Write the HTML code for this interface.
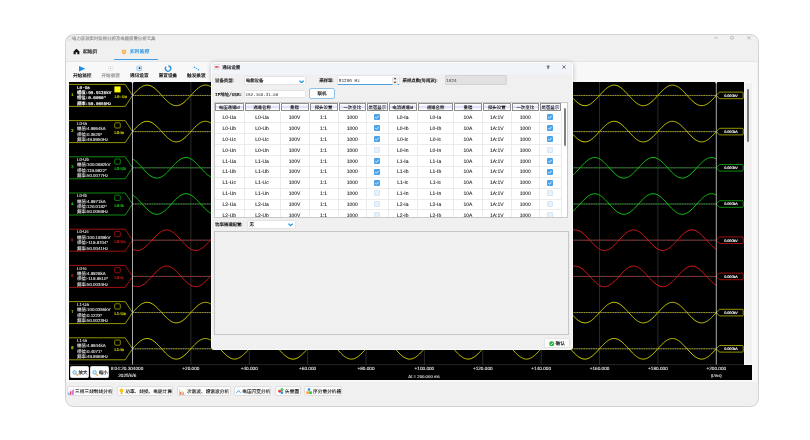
<!DOCTYPE html><html lang="zh"><head><meta charset="utf-8"><title>电力录波实时监视分析及电能质量分析工具</title><style>
*{box-sizing:border-box;margin:0;padding:0}
html,body{text-rendering:geometricPrecision;width:810px;height:440px;background:#fff;overflow:hidden}
body{position:relative;font-family:"Liberation Sans","Noto Sans CJK SC",sans-serif;color:#222}
.a{position:absolute}
svg.ov{position:absolute;left:0;top:0;text-rendering:geometricPrecision;will-change:transform}
#win{left:64.6px;top:34.3px;width:694.2px;height:373px;background:#f0f0f0;border:1.8px solid #d2d2d2;border-radius:8.5px;overflow:hidden}
#toolbar{left:66.4px;top:61px;width:690.6px;height:321.4px;background:#f8f8f8;border-top:0.5px solid #e6e6e6}
#chart{left:69px;top:82.4px;width:675px;height:282.6px;background:#000}
#axis{left:69px;top:365px;width:683px;height:14.5px;background:#000}
#vs{left:744px;top:82.4px;width:8.5px;height:282.6px;background:#f0f0f0;border:1px solid #fafafa}
#vthumb{left:746.8px;top:88.5px;width:2.4px;height:53px;background:#7a7a7a;border-radius:1px}
.bbtn{top:385.7px;height:10.7px;background:#fcfcfc;border:0.6px solid #dedede;border-radius:2px}
.zb{top:366.3px;height:12.2px;background:#fdfdfd;border-radius:1.5px;border:0.5px solid #ddd}
#dlg{left:211px;top:61.5px;width:361.7px;height:288.7px;background:#f0f0f0;border:0.8px solid #fafafa;border-radius:3px;box-shadow:0 1px 5px rgba(0,0,0,.25);overflow:hidden}
#dtitle{left:0;top:0;width:362px;height:11px;background:#f1f4f9}
.inp{background:#fff;border:0.5px solid #e3e3e3;border-radius:1.5px}
.hd{position:absolute;top:102.7px;height:8.6px;border:0.7px solid #8e8e8e;background:linear-gradient(#fff 0,#fff 22%,#dfe1fb 30%,#dfe1fb 70%,#fff 78%,#fff 100%);}
.cb{position:absolute;width:6px;height:6px;border-radius:1px;transform:translate(-50%,-50%)}
.cb.on{background:#4da3ea}
.cb.off{background:#e6f1fb;border:0.5px solid #d3e5f6}
</style></head><body>
<div id="win" class="a"></div>
<svg class="a" style="left:66.5px;top:36px" width="5" height="5" viewBox="0 0 5 5"><circle cx="2.5" cy="2.5" r="1.6" fill="#fff" stroke="#bbb" stroke-width=".6"/></svg>
<svg class="a" style="left:705px;top:33px" width="52" height="10" viewBox="705 33 52 10" fill="none" stroke="#a8a8a8" stroke-width=".7"><path d="M714 37.8h3.6"/><circle cx="732" cy="37.8" r="1.5"/><path d="M747.4 36.2l3.2 3.2M750.6 36.2l-3.2 3.2"/></svg>
<svg class="a" style="left:73px;top:48px" width="7" height="7" viewBox="0 0 7 7"><path d="M3.5 0.8L0.6 3.5V6.2H2.7V4.3H4.3V6.2H6.4V3.5Z" fill="#111"/></svg>
<svg class="a" style="left:120.5px;top:48.5px" width="6" height="6" viewBox="0 0 6 6"><path d="M0.8 0.8H5.2V3.4Q5.2 4.4 3 5.4Q0.8 4.4 0.8 3.4Z" fill="#f7b560"/><path d="M2 2.4h2" stroke="#fde6c4" stroke-width=".6"/></svg>
<div class="a" style="left:113.6px;top:58.6px;width:44.6px;height:1.1px;background:#3a9fe8;border-radius:.5px"></div>
<div id="toolbar" class="a"></div>
<svg class="a" style="left:70px;top:62px" width="140" height="12" viewBox="70 62 140 12"><path d="M79 65.9L85.3 68.7L79 71.5Z" fill="#1e8fe0"/><circle cx="110.7" cy="68.4" r="2.3" fill="#fff" stroke="#cfcfcf" stroke-width=".5"/><path d="M110.1 67.5l1.4 .9l-1.4 .9z" fill="#999"/><rect x="136.9" y="66.2" width="4.8" height="4.4" rx=".8" fill="#eaf4fd" stroke="#5db0ee" stroke-width=".6"/><circle cx="139.6" cy="68.2" r=".9" fill="#222"/><path d="M169.9 66.4A2.7 2.7 0 1 1 166 66.7" fill="none" stroke="#1e8fe0" stroke-width="1.2"/><path d="M168.3 64.9l2.6 1.2l-2 1.7z" fill="#1e8fe0"/><path d="M194.6 67.4L196.5 68.4L198.4 69.6" stroke="#8fc9f4" stroke-width=".5" fill="none"/><circle cx="194.4" cy="67.3" r=".7" fill="#2b97e5"/><circle cx="196.5" cy="68.5" r=".6" fill="#2b97e5"/><circle cx="198.6" cy="69.7" r=".7" fill="#2b97e5"/></svg>
<div id="chart" class="a"></div><div id="axis" class="a"></div><div id="vs" class="a"></div><div id="vthumb" class="a"></div>
<svg class="ov" width="810" height="440" viewBox="0 0 810 440" font-family='"Liberation Sans","Noto Sans CJK SC",sans-serif'><defs><clipPath id="cc"><rect x="69" y="82" width="675" height="283"/></clipPath></defs><g clip-path="url(#cc)"><path d="M190.88 82V365" stroke="#2b2b2b" stroke-width="1"/><path d="M249.26 82V365" stroke="#2b2b2b" stroke-width="1"/><path d="M307.64 82V365" stroke="#2b2b2b" stroke-width="1"/><path d="M366.02 82V365" stroke="#2b2b2b" stroke-width="1"/><path d="M424.40 82V365" stroke="#2b2b2b" stroke-width="1"/><path d="M482.78 82V365" stroke="#2b2b2b" stroke-width="1"/><path d="M541.16 82V365" stroke="#2b2b2b" stroke-width="1"/><path d="M599.54 82V365" stroke="#2b2b2b" stroke-width="1"/><path d="M657.92 82V365" stroke="#2b2b2b" stroke-width="1"/><path d="M132.50 95.40H716.30" stroke="#484848" stroke-width="1"/><path d="M132.50 95.40H716.30" stroke="#cfcf00" stroke-width=".8" stroke-dasharray="1.4 1" opacity=".8"/><path d="M132.50 95.40L133.47 94.32L134.45 93.26L135.42 92.22L136.39 91.21L137.37 90.25L138.34 89.35L139.31 88.51L140.28 87.75L141.26 87.07L142.23 86.48L143.20 85.99L144.18 85.60L145.15 85.33L146.12 85.16L147.09 85.10L148.07 85.16L149.04 85.33L150.01 85.60L150.99 85.99L151.96 86.48L152.93 87.07L153.91 87.75L154.88 88.51L155.85 89.35L156.82 90.25L157.80 91.21L158.77 92.22L159.74 93.26L160.72 94.32L161.69 95.40L162.66 96.48L163.64 97.54L164.61 98.58L165.58 99.59L166.56 100.55L167.53 101.45L168.50 102.29L169.47 103.05L170.45 103.73L171.42 104.32L172.39 104.81L173.37 105.20L174.34 105.47L175.31 105.64L176.28 105.70L177.26 105.64L178.23 105.47L179.20 105.20L180.18 104.81L181.15 104.32L182.12 103.73L183.10 103.05L184.07 102.29L185.04 101.45L186.02 100.55L186.99 99.59L187.96 98.58L188.93 97.54L189.91 96.48L190.88 95.40L191.85 94.32L192.83 93.26L193.80 92.22L194.77 91.21L195.75 90.25L196.72 89.35L197.69 88.51L198.66 87.75L199.64 87.07L200.61 86.48L201.58 85.99L202.56 85.60L203.53 85.33L204.50 85.16L205.48 85.10L206.45 85.16L207.42 85.33L208.39 85.60L209.37 85.99L210.34 86.48L211.31 87.07L212.29 87.75L213.26 88.51L214.23 89.35L215.21 90.25L216.18 91.21L217.15 92.22L218.12 93.26L219.10 94.32L220.07 95.40L221.04 96.48L222.02 97.54L222.99 98.58L223.96 99.59L224.94 100.55L225.91 101.45L226.88 102.29L227.85 103.05L228.83 103.73L229.80 104.32L230.77 104.81L231.75 105.20L232.72 105.47L233.69 105.64L234.67 105.70L235.64 105.64L236.61 105.47L237.58 105.20L238.56 104.81L239.53 104.32L240.50 103.73L241.48 103.05L242.45 102.29L243.42 101.45L244.40 100.55L245.37 99.59L246.34 98.58L247.31 97.54L248.29 96.48L249.26 95.40L250.23 94.32L251.21 93.26L252.18 92.22L253.15 91.21L254.13 90.25L255.10 89.35L256.07 88.51L257.04 87.75L258.02 87.07L258.99 86.48L259.96 85.99L260.94 85.60L261.91 85.33L262.88 85.16L263.86 85.10L264.83 85.16L265.80 85.33L266.77 85.60L267.75 85.99L268.72 86.48L269.69 87.07L270.67 87.75L271.64 88.51L272.61 89.35L273.59 90.25L274.56 91.21L275.53 92.22L276.50 93.26L277.48 94.32L278.45 95.40L279.42 96.48L280.40 97.54L281.37 98.58L282.34 99.59L283.32 100.55L284.29 101.45L285.26 102.29L286.23 103.05L287.21 103.73L288.18 104.32L289.15 104.81L290.13 105.20L291.10 105.47L292.07 105.64L293.05 105.70L294.02 105.64L294.99 105.47L295.96 105.20L296.94 104.81L297.91 104.32L298.88 103.73L299.86 103.05L300.83 102.29L301.80 101.45L302.78 100.55L303.75 99.59L304.72 98.58L305.69 97.54L306.67 96.48L307.64 95.40L308.61 94.32L309.59 93.26L310.56 92.22L311.53 91.21L312.50 90.25L313.48 89.35L314.45 88.51L315.42 87.75L316.40 87.07L317.37 86.48L318.34 85.99L319.32 85.60L320.29 85.33L321.26 85.16L322.24 85.10L323.21 85.16L324.18 85.33L325.15 85.60L326.13 85.99L327.10 86.48L328.07 87.07L329.05 87.75L330.02 88.51L330.99 89.35L331.97 90.25L332.94 91.21L333.91 92.22L334.88 93.26L335.86 94.32L336.83 95.40L337.80 96.48L338.78 97.54L339.75 98.58L340.72 99.59L341.70 100.55L342.67 101.45L343.64 102.29L344.61 103.05L345.59 103.73L346.56 104.32L347.53 104.81L348.51 105.20L349.48 105.47L350.45 105.64L351.43 105.70L352.40 105.64L353.37 105.47L354.34 105.20L355.32 104.81L356.29 104.32L357.26 103.73L358.24 103.05L359.21 102.29L360.18 101.45L361.16 100.55L362.13 99.59L363.10 98.58L364.07 97.54L365.05 96.48L366.02 95.40L366.99 94.32L367.97 93.26L368.94 92.22L369.91 91.21L370.89 90.25L371.86 89.35L372.83 88.51L373.80 87.75L374.78 87.07L375.75 86.48L376.72 85.99L377.70 85.60L378.67 85.33L379.64 85.16L380.62 85.10L381.59 85.16L382.56 85.33L383.53 85.60L384.51 85.99L385.48 86.48L386.45 87.07L387.43 87.75L388.40 88.51L389.37 89.35L390.35 90.25L391.32 91.21L392.29 92.22L393.26 93.26L394.24 94.32L395.21 95.40L396.18 96.48L397.16 97.54L398.13 98.58L399.10 99.59L400.08 100.55L401.05 101.45L402.02 102.29L402.99 103.05L403.97 103.73L404.94 104.32L405.91 104.81L406.89 105.20L407.86 105.47L408.83 105.64L409.81 105.70L410.78 105.64L411.75 105.47L412.72 105.20L413.70 104.81L414.67 104.32L415.64 103.73L416.62 103.05L417.59 102.29L418.56 101.45L419.54 100.55L420.51 99.59L421.48 98.58L422.45 97.54L423.43 96.48L424.40 95.40L425.37 94.32L426.35 93.26L427.32 92.22L428.29 91.21L429.27 90.25L430.24 89.35L431.21 88.51L432.18 87.75L433.16 87.07L434.13 86.48L435.10 85.99L436.08 85.60L437.05 85.33L438.02 85.16L439.00 85.10L439.97 85.16L440.94 85.33L441.91 85.60L442.89 85.99L443.86 86.48L444.83 87.07L445.81 87.75L446.78 88.51L447.75 89.35L448.73 90.25L449.70 91.21L450.67 92.22L451.64 93.26L452.62 94.32L453.59 95.40L454.56 96.48L455.54 97.54L456.51 98.58L457.48 99.59L458.46 100.55L459.43 101.45L460.40 102.29L461.37 103.05L462.35 103.73L463.32 104.32L464.29 104.81L465.27 105.20L466.24 105.47L467.21 105.64L468.19 105.70L469.16 105.64L470.13 105.47L471.10 105.20L472.08 104.81L473.05 104.32L474.02 103.73L475.00 103.05L475.97 102.29L476.94 101.45L477.92 100.55L478.89 99.59L479.86 98.58L480.83 97.54L481.81 96.48L482.78 95.40L483.75 94.32L484.73 93.26L485.70 92.22L486.67 91.21L487.65 90.25L488.62 89.35L489.59 88.51L490.56 87.75L491.54 87.07L492.51 86.48L493.48 85.99L494.46 85.60L495.43 85.33L496.40 85.16L497.38 85.10L498.35 85.16L499.32 85.33L500.29 85.60L501.27 85.99L502.24 86.48L503.21 87.07L504.19 87.75L505.16 88.51L506.13 89.35L507.11 90.25L508.08 91.21L509.05 92.22L510.02 93.26L511.00 94.32L511.97 95.40L512.94 96.48L513.92 97.54L514.89 98.58L515.86 99.59L516.84 100.55L517.81 101.45L518.78 102.29L519.75 103.05L520.73 103.73L521.70 104.32L522.67 104.81L523.65 105.20L524.62 105.47L525.59 105.64L526.57 105.70L527.54 105.64L528.51 105.47L529.48 105.20L530.46 104.81L531.43 104.32L532.40 103.73L533.38 103.05L534.35 102.29L535.32 101.45L536.30 100.55L537.27 99.59L538.24 98.58L539.21 97.54L540.19 96.48L541.16 95.40L542.13 94.32L543.11 93.26L544.08 92.22L545.05 91.21L546.03 90.25L547.00 89.35L547.97 88.51L548.94 87.75L549.92 87.07L550.89 86.48L551.86 85.99L552.84 85.60L553.81 85.33L554.78 85.16L555.76 85.10L556.73 85.16L557.70 85.33L558.67 85.60L559.65 85.99L560.62 86.48L561.59 87.07L562.57 87.75L563.54 88.51L564.51 89.35L565.49 90.25L566.46 91.21L567.43 92.22L568.40 93.26L569.38 94.32L570.35 95.40L571.32 96.48L572.30 97.54L573.27 98.58L574.24 99.59L575.22 100.55L576.19 101.45L577.16 102.29L578.13 103.05L579.11 103.73L580.08 104.32L581.05 104.81L582.03 105.20L583.00 105.47L583.97 105.64L584.95 105.70L585.92 105.64L586.89 105.47L587.86 105.20L588.84 104.81L589.81 104.32L590.78 103.73L591.76 103.05L592.73 102.29L593.70 101.45L594.68 100.55L595.65 99.59L596.62 98.58L597.59 97.54L598.57 96.48L599.54 95.40L600.51 94.32L601.49 93.26L602.46 92.22L603.43 91.21L604.41 90.25L605.38 89.35L606.35 88.51L607.32 87.75L608.30 87.07L609.27 86.48L610.24 85.99L611.22 85.60L612.19 85.33L613.16 85.16L614.14 85.10L615.11 85.16L616.08 85.33L617.05 85.60L618.03 85.99L619.00 86.48L619.97 87.07L620.95 87.75L621.92 88.51L622.89 89.35L623.87 90.25L624.84 91.21L625.81 92.22L626.78 93.26L627.76 94.32L628.73 95.40L629.70 96.48L630.68 97.54L631.65 98.58L632.62 99.59L633.60 100.55L634.57 101.45L635.54 102.29L636.51 103.05L637.49 103.73L638.46 104.32L639.43 104.81L640.41 105.20L641.38 105.47L642.35 105.64L643.33 105.70L644.30 105.64L645.27 105.47L646.24 105.20L647.22 104.81L648.19 104.32L649.16 103.73L650.14 103.05L651.11 102.29L652.08 101.45L653.06 100.55L654.03 99.59L655.00 98.58L655.97 97.54L656.95 96.48L657.92 95.40L658.89 94.32L659.87 93.26L660.84 92.22L661.81 91.21L662.79 90.25L663.76 89.35L664.73 88.51L665.70 87.75L666.68 87.07L667.65 86.48L668.62 85.99L669.60 85.60L670.57 85.33L671.54 85.16L672.52 85.10L673.49 85.16L674.46 85.33L675.43 85.60L676.41 85.99L677.38 86.48L678.35 87.07L679.33 87.75L680.30 88.51L681.27 89.35L682.25 90.25L683.22 91.21L684.19 92.22L685.16 93.26L686.14 94.32L687.11 95.40L688.08 96.48L689.06 97.54L690.03 98.58L691.00 99.59L691.98 100.55L692.95 101.45L693.92 102.29L694.89 103.05L695.87 103.73L696.84 104.32L697.81 104.81L698.79 105.20L699.76 105.47L700.73 105.64L701.71 105.70L702.68 105.64L703.65 105.47L704.62 105.20L705.60 104.81L706.57 104.32L707.54 103.73L708.52 103.05L709.49 102.29L710.46 101.45L711.44 100.55L712.41 99.59L713.38 98.58L714.35 97.54L715.33 96.48L716.30 95.40" fill="none" stroke="#cfcf00" stroke-width="1"/><path d="M68 84.40H125.2L132.50 95.40L125.2 106.40H68" fill="#000" stroke="#b9b900" stroke-width=".8"/><text x="71.30" y="96.04" font-size="4" fill="#cfcf00" stroke="#cfcf00" stroke-width="0.18">1</text><text x="77.00" y="88.55" font-size="4.3" fill="#f4f4f4" stroke="#f4f4f4" stroke-width="0.18" font-family='"Liberation Mono","Noto Sans CJK SC",monospace'>L0-Ua</text><text x="77.00" y="93.95" font-size="4.3" fill="#f4f4f4" stroke="#f4f4f4" stroke-width="0.18" font-family='"Liberation Mono","Noto Sans CJK SC",monospace'>幅值:99.9135kV</text><text x="77.00" y="99.35" font-size="4.3" fill="#f4f4f4" stroke="#f4f4f4" stroke-width="0.18" font-family='"Liberation Mono","Noto Sans CJK SC",monospace'>相位:0.0000°</text><text x="77.00" y="104.75" font-size="4.3" fill="#f4f4f4" stroke="#f4f4f4" stroke-width="0.18" font-family='"Liberation Mono","Noto Sans CJK SC",monospace'>频率:50.0065Hz</text><rect x="114.4" y="86.40" width="6.2" height="6" fill="#ffff00"/><text x="114.40" y="97.91" font-size="4.2" fill="#cfcf00" stroke="#cfcf00" stroke-width="0.18" font-family='"Liberation Mono","Noto Sans CJK SC",monospace'>L0-Ua</text><path d="M716.30 95.40L719.4 92.10H742.4Q743.2 92.10 743.2 92.90V97.90Q743.2 98.70 742.4 98.70H719.4Z" fill="#000" stroke="#b9b900" stroke-width=".8"/><text x="731.00" y="96.73" font-size="3.7" fill="#f4f4f4" stroke="#f4f4f4" stroke-width="0.18" text-anchor="middle">0.000kV</text><path d="M132.50 131.60H716.30" stroke="#484848" stroke-width="1"/><path d="M132.50 131.60H716.30" stroke="#cfcf00" stroke-width=".8" stroke-dasharray="1.4 1" opacity=".8"/><path d="M132.50 131.54L133.47 130.46L134.45 129.40L135.42 128.36L136.39 127.35L137.37 126.39L138.34 125.49L139.31 124.66L140.28 123.90L141.26 123.23L142.23 122.65L143.20 122.16L144.18 121.78L145.15 121.51L146.12 121.35L147.09 121.30L148.07 121.36L149.04 121.54L150.01 121.82L150.99 122.22L151.96 122.71L152.93 123.31L153.91 123.99L154.88 124.76L155.85 125.60L156.82 126.51L157.80 127.47L158.77 128.48L159.74 129.52L160.72 130.59L161.69 131.66L162.66 132.74L163.64 133.80L164.61 134.84L165.58 135.85L166.56 136.81L167.53 137.71L168.50 138.54L169.47 139.30L170.45 139.97L171.42 140.55L172.39 141.04L173.37 141.42L174.34 141.69L175.31 141.85L176.28 141.90L177.26 141.84L178.23 141.66L179.20 141.38L180.18 140.98L181.15 140.49L182.12 139.89L183.10 139.21L184.07 138.44L185.04 137.60L186.02 136.69L186.99 135.73L187.96 134.72L188.93 133.68L189.91 132.61L190.88 131.54L191.85 130.46L192.83 129.40L193.80 128.36L194.77 127.35L195.75 126.39L196.72 125.49L197.69 124.66L198.66 123.90L199.64 123.23L200.61 122.65L201.58 122.16L202.56 121.78L203.53 121.51L204.50 121.35L205.48 121.30L206.45 121.36L207.42 121.54L208.39 121.82L209.37 122.22L210.34 122.71L211.31 123.31L212.29 123.99L213.26 124.76L214.23 125.60L215.21 126.51L216.18 127.47L217.15 128.48L218.12 129.52L219.10 130.59L220.07 131.66L221.04 132.74L222.02 133.80L222.99 134.84L223.96 135.85L224.94 136.81L225.91 137.71L226.88 138.54L227.85 139.30L228.83 139.97L229.80 140.55L230.77 141.04L231.75 141.42L232.72 141.69L233.69 141.85L234.67 141.90L235.64 141.84L236.61 141.66L237.58 141.38L238.56 140.98L239.53 140.49L240.50 139.89L241.48 139.21L242.45 138.44L243.42 137.60L244.40 136.69L245.37 135.73L246.34 134.72L247.31 133.68L248.29 132.61L249.26 131.54L250.23 130.46L251.21 129.40L252.18 128.36L253.15 127.35L254.13 126.39L255.10 125.49L256.07 124.66L257.04 123.90L258.02 123.23L258.99 122.65L259.96 122.16L260.94 121.78L261.91 121.51L262.88 121.35L263.86 121.30L264.83 121.36L265.80 121.54L266.77 121.82L267.75 122.22L268.72 122.71L269.69 123.31L270.67 123.99L271.64 124.76L272.61 125.60L273.59 126.51L274.56 127.47L275.53 128.48L276.50 129.52L277.48 130.59L278.45 131.66L279.42 132.74L280.40 133.80L281.37 134.84L282.34 135.85L283.32 136.81L284.29 137.71L285.26 138.54L286.23 139.30L287.21 139.97L288.18 140.55L289.15 141.04L290.13 141.42L291.10 141.69L292.07 141.85L293.05 141.90L294.02 141.84L294.99 141.66L295.96 141.38L296.94 140.98L297.91 140.49L298.88 139.89L299.86 139.21L300.83 138.44L301.80 137.60L302.78 136.69L303.75 135.73L304.72 134.72L305.69 133.68L306.67 132.61L307.64 131.54L308.61 130.46L309.59 129.40L310.56 128.36L311.53 127.35L312.50 126.39L313.48 125.49L314.45 124.66L315.42 123.90L316.40 123.23L317.37 122.65L318.34 122.16L319.32 121.78L320.29 121.51L321.26 121.35L322.24 121.30L323.21 121.36L324.18 121.54L325.15 121.82L326.13 122.22L327.10 122.71L328.07 123.31L329.05 123.99L330.02 124.76L330.99 125.60L331.97 126.51L332.94 127.47L333.91 128.48L334.88 129.52L335.86 130.59L336.83 131.66L337.80 132.74L338.78 133.80L339.75 134.84L340.72 135.85L341.70 136.81L342.67 137.71L343.64 138.54L344.61 139.30L345.59 139.97L346.56 140.55L347.53 141.04L348.51 141.42L349.48 141.69L350.45 141.85L351.43 141.90L352.40 141.84L353.37 141.66L354.34 141.38L355.32 140.98L356.29 140.49L357.26 139.89L358.24 139.21L359.21 138.44L360.18 137.60L361.16 136.69L362.13 135.73L363.10 134.72L364.07 133.68L365.05 132.61L366.02 131.54L366.99 130.46L367.97 129.40L368.94 128.36L369.91 127.35L370.89 126.39L371.86 125.49L372.83 124.66L373.80 123.90L374.78 123.23L375.75 122.65L376.72 122.16L377.70 121.78L378.67 121.51L379.64 121.35L380.62 121.30L381.59 121.36L382.56 121.54L383.53 121.82L384.51 122.22L385.48 122.71L386.45 123.31L387.43 123.99L388.40 124.76L389.37 125.60L390.35 126.51L391.32 127.47L392.29 128.48L393.26 129.52L394.24 130.59L395.21 131.66L396.18 132.74L397.16 133.80L398.13 134.84L399.10 135.85L400.08 136.81L401.05 137.71L402.02 138.54L402.99 139.30L403.97 139.97L404.94 140.55L405.91 141.04L406.89 141.42L407.86 141.69L408.83 141.85L409.81 141.90L410.78 141.84L411.75 141.66L412.72 141.38L413.70 140.98L414.67 140.49L415.64 139.89L416.62 139.21L417.59 138.44L418.56 137.60L419.54 136.69L420.51 135.73L421.48 134.72L422.45 133.68L423.43 132.61L424.40 131.54L425.37 130.46L426.35 129.40L427.32 128.36L428.29 127.35L429.27 126.39L430.24 125.49L431.21 124.66L432.18 123.90L433.16 123.23L434.13 122.65L435.10 122.16L436.08 121.78L437.05 121.51L438.02 121.35L439.00 121.30L439.97 121.36L440.94 121.54L441.91 121.82L442.89 122.22L443.86 122.71L444.83 123.31L445.81 123.99L446.78 124.76L447.75 125.60L448.73 126.51L449.70 127.47L450.67 128.48L451.64 129.52L452.62 130.59L453.59 131.66L454.56 132.74L455.54 133.80L456.51 134.84L457.48 135.85L458.46 136.81L459.43 137.71L460.40 138.54L461.37 139.30L462.35 139.97L463.32 140.55L464.29 141.04L465.27 141.42L466.24 141.69L467.21 141.85L468.19 141.90L469.16 141.84L470.13 141.66L471.10 141.38L472.08 140.98L473.05 140.49L474.02 139.89L475.00 139.21L475.97 138.44L476.94 137.60L477.92 136.69L478.89 135.73L479.86 134.72L480.83 133.68L481.81 132.61L482.78 131.54L483.75 130.46L484.73 129.40L485.70 128.36L486.67 127.35L487.65 126.39L488.62 125.49L489.59 124.66L490.56 123.90L491.54 123.23L492.51 122.65L493.48 122.16L494.46 121.78L495.43 121.51L496.40 121.35L497.38 121.30L498.35 121.36L499.32 121.54L500.29 121.82L501.27 122.22L502.24 122.71L503.21 123.31L504.19 123.99L505.16 124.76L506.13 125.60L507.11 126.51L508.08 127.47L509.05 128.48L510.02 129.52L511.00 130.59L511.97 131.66L512.94 132.74L513.92 133.80L514.89 134.84L515.86 135.85L516.84 136.81L517.81 137.71L518.78 138.54L519.75 139.30L520.73 139.97L521.70 140.55L522.67 141.04L523.65 141.42L524.62 141.69L525.59 141.85L526.57 141.90L527.54 141.84L528.51 141.66L529.48 141.38L530.46 140.98L531.43 140.49L532.40 139.89L533.38 139.21L534.35 138.44L535.32 137.60L536.30 136.69L537.27 135.73L538.24 134.72L539.21 133.68L540.19 132.61L541.16 131.54L542.13 130.46L543.11 129.40L544.08 128.36L545.05 127.35L546.03 126.39L547.00 125.49L547.97 124.66L548.94 123.90L549.92 123.23L550.89 122.65L551.86 122.16L552.84 121.78L553.81 121.51L554.78 121.35L555.76 121.30L556.73 121.36L557.70 121.54L558.67 121.82L559.65 122.22L560.62 122.71L561.59 123.31L562.57 123.99L563.54 124.76L564.51 125.60L565.49 126.51L566.46 127.47L567.43 128.48L568.40 129.52L569.38 130.59L570.35 131.66L571.32 132.74L572.30 133.80L573.27 134.84L574.24 135.85L575.22 136.81L576.19 137.71L577.16 138.54L578.13 139.30L579.11 139.97L580.08 140.55L581.05 141.04L582.03 141.42L583.00 141.69L583.97 141.85L584.95 141.90L585.92 141.84L586.89 141.66L587.86 141.38L588.84 140.98L589.81 140.49L590.78 139.89L591.76 139.21L592.73 138.44L593.70 137.60L594.68 136.69L595.65 135.73L596.62 134.72L597.59 133.68L598.57 132.61L599.54 131.54L600.51 130.46L601.49 129.40L602.46 128.36L603.43 127.35L604.41 126.39L605.38 125.49L606.35 124.66L607.32 123.90L608.30 123.23L609.27 122.65L610.24 122.16L611.22 121.78L612.19 121.51L613.16 121.35L614.14 121.30L615.11 121.36L616.08 121.54L617.05 121.82L618.03 122.22L619.00 122.71L619.97 123.31L620.95 123.99L621.92 124.76L622.89 125.60L623.87 126.51L624.84 127.47L625.81 128.48L626.78 129.52L627.76 130.59L628.73 131.66L629.70 132.74L630.68 133.80L631.65 134.84L632.62 135.85L633.60 136.81L634.57 137.71L635.54 138.54L636.51 139.30L637.49 139.97L638.46 140.55L639.43 141.04L640.41 141.42L641.38 141.69L642.35 141.85L643.33 141.90L644.30 141.84L645.27 141.66L646.24 141.38L647.22 140.98L648.19 140.49L649.16 139.89L650.14 139.21L651.11 138.44L652.08 137.60L653.06 136.69L654.03 135.73L655.00 134.72L655.97 133.68L656.95 132.61L657.92 131.54L658.89 130.46L659.87 129.40L660.84 128.36L661.81 127.35L662.79 126.39L663.76 125.49L664.73 124.66L665.70 123.90L666.68 123.23L667.65 122.65L668.62 122.16L669.60 121.78L670.57 121.51L671.54 121.35L672.52 121.30L673.49 121.36L674.46 121.54L675.43 121.82L676.41 122.22L677.38 122.71L678.35 123.31L679.33 123.99L680.30 124.76L681.27 125.60L682.25 126.51L683.22 127.47L684.19 128.48L685.16 129.52L686.14 130.59L687.11 131.66L688.08 132.74L689.06 133.80L690.03 134.84L691.00 135.85L691.98 136.81L692.95 137.71L693.92 138.54L694.89 139.30L695.87 139.97L696.84 140.55L697.81 141.04L698.79 141.42L699.76 141.69L700.73 141.85L701.71 141.90L702.68 141.84L703.65 141.66L704.62 141.38L705.60 140.98L706.57 140.49L707.54 139.89L708.52 139.21L709.49 138.44L710.46 137.60L711.44 136.69L712.41 135.73L713.38 134.72L714.35 133.68L715.33 132.61L716.30 131.54" fill="none" stroke="#cfcf00" stroke-width="1"/><path d="M68 120.60H125.2L132.50 131.60L125.2 142.60H68" fill="#000" stroke="#b9b900" stroke-width=".8"/><text x="71.30" y="132.24" font-size="4" fill="#cfcf00" stroke="#cfcf00" stroke-width="0.18">2</text><text x="77.00" y="124.78" font-size="4.4" fill="#e8e8e8" stroke="#e8e8e8" stroke-width="0.08">L0-Ia</text><text x="77.00" y="130.18" font-size="4.4" fill="#e8e8e8" stroke="#e8e8e8" stroke-width="0.08">幅值:4.9964kA</text><text x="77.00" y="135.58" font-size="4.4" fill="#e8e8e8" stroke="#e8e8e8" stroke-width="0.08">相位:0.3629°</text><text x="77.00" y="140.98" font-size="4.4" fill="#e8e8e8" stroke="#e8e8e8" stroke-width="0.08">频率:49.9950Hz</text><rect x="114.7" y="122.80" width="5.6" height="5.2" rx="1" fill="none" stroke="#b9b900" stroke-width=".7"/><text x="114.40" y="134.11" font-size="4.2" fill="#cfcf00" stroke="#cfcf00" stroke-width="0.18">L0-Ia</text><path d="M716.30 131.60L719.4 128.30H742.4Q743.2 128.30 743.2 129.10V134.10Q743.2 134.90 742.4 134.90H719.4Z" fill="#000" stroke="#b9b900" stroke-width=".8"/><text x="731.00" y="132.93" font-size="3.7" fill="#f4f4f4" stroke="#f4f4f4" stroke-width="0.18" text-anchor="middle">0.000kA</text><path d="M132.50 167.80H716.30" stroke="#484848" stroke-width="1"/><path d="M132.50 167.80H716.30" stroke="#12c812" stroke-width=".8" stroke-dasharray="1.4 1" opacity=".8"/><path d="M132.50 158.88L133.47 159.47L134.45 160.14L135.42 160.91L136.39 161.74L137.37 162.65L138.34 163.61L139.31 164.61L140.28 165.65L141.26 166.72L142.23 167.80L143.20 168.87L144.18 169.94L145.15 170.98L146.12 171.99L147.09 172.95L148.07 173.85L149.04 174.69L150.01 175.45L150.99 176.13L151.96 176.72L152.93 177.21L153.91 177.59L154.88 177.87L155.85 178.04L156.82 178.10L157.80 178.04L158.77 177.88L159.74 177.60L160.72 177.21L161.69 176.72L162.66 176.13L163.64 175.46L164.61 174.69L165.58 173.86L166.56 172.95L167.53 171.99L168.50 170.99L169.47 169.95L170.45 168.88L171.42 167.80L172.39 166.73L173.37 165.66L174.34 164.62L175.31 163.61L176.28 162.65L177.26 161.75L178.23 160.91L179.20 160.15L180.18 159.47L181.15 158.88L182.12 158.39L183.10 158.01L184.07 157.73L185.04 157.56L186.02 157.50L186.99 157.56L187.96 157.72L188.93 158.00L189.91 158.39L190.88 158.88L191.85 159.47L192.83 160.14L193.80 160.91L194.77 161.74L195.75 162.65L196.72 163.61L197.69 164.61L198.66 165.65L199.64 166.72L200.61 167.80L201.58 168.87L202.56 169.94L203.53 170.98L204.50 171.99L205.48 172.95L206.45 173.85L207.42 174.69L208.39 175.45L209.37 176.13L210.34 176.72L211.31 177.21L212.29 177.59L213.26 177.87L214.23 178.04L215.21 178.10L216.18 178.04L217.15 177.88L218.12 177.60L219.10 177.21L220.07 176.72L221.04 176.13L222.02 175.46L222.99 174.69L223.96 173.86L224.94 172.95L225.91 171.99L226.88 170.99L227.85 169.95L228.83 168.88L229.80 167.80L230.77 166.73L231.75 165.66L232.72 164.62L233.69 163.61L234.67 162.65L235.64 161.75L236.61 160.91L237.58 160.15L238.56 159.47L239.53 158.88L240.50 158.39L241.48 158.01L242.45 157.73L243.42 157.56L244.40 157.50L245.37 157.56L246.34 157.72L247.31 158.00L248.29 158.39L249.26 158.88L250.23 159.47L251.21 160.14L252.18 160.91L253.15 161.74L254.13 162.65L255.10 163.61L256.07 164.61L257.04 165.65L258.02 166.72L258.99 167.80L259.96 168.87L260.94 169.94L261.91 170.98L262.88 171.99L263.86 172.95L264.83 173.85L265.80 174.69L266.77 175.45L267.75 176.13L268.72 176.72L269.69 177.21L270.67 177.59L271.64 177.87L272.61 178.04L273.59 178.10L274.56 178.04L275.53 177.88L276.50 177.60L277.48 177.21L278.45 176.72L279.42 176.13L280.40 175.46L281.37 174.69L282.34 173.86L283.32 172.95L284.29 171.99L285.26 170.99L286.23 169.95L287.21 168.88L288.18 167.80L289.15 166.73L290.13 165.66L291.10 164.62L292.07 163.61L293.05 162.65L294.02 161.75L294.99 160.91L295.96 160.15L296.94 159.47L297.91 158.88L298.88 158.39L299.86 158.01L300.83 157.73L301.80 157.56L302.78 157.50L303.75 157.56L304.72 157.72L305.69 158.00L306.67 158.39L307.64 158.88L308.61 159.47L309.59 160.14L310.56 160.91L311.53 161.74L312.50 162.65L313.48 163.61L314.45 164.61L315.42 165.65L316.40 166.72L317.37 167.80L318.34 168.87L319.32 169.94L320.29 170.98L321.26 171.99L322.24 172.95L323.21 173.85L324.18 174.69L325.15 175.45L326.13 176.13L327.10 176.72L328.07 177.21L329.05 177.59L330.02 177.87L330.99 178.04L331.97 178.10L332.94 178.04L333.91 177.88L334.88 177.60L335.86 177.21L336.83 176.72L337.80 176.13L338.78 175.46L339.75 174.69L340.72 173.86L341.70 172.95L342.67 171.99L343.64 170.99L344.61 169.95L345.59 168.88L346.56 167.80L347.53 166.73L348.51 165.66L349.48 164.62L350.45 163.61L351.43 162.65L352.40 161.75L353.37 160.91L354.34 160.15L355.32 159.47L356.29 158.88L357.26 158.39L358.24 158.01L359.21 157.73L360.18 157.56L361.16 157.50L362.13 157.56L363.10 157.72L364.07 158.00L365.05 158.39L366.02 158.88L366.99 159.47L367.97 160.14L368.94 160.91L369.91 161.74L370.89 162.65L371.86 163.61L372.83 164.61L373.80 165.65L374.78 166.72L375.75 167.80L376.72 168.87L377.70 169.94L378.67 170.98L379.64 171.99L380.62 172.95L381.59 173.85L382.56 174.69L383.53 175.45L384.51 176.13L385.48 176.72L386.45 177.21L387.43 177.59L388.40 177.87L389.37 178.04L390.35 178.10L391.32 178.04L392.29 177.88L393.26 177.60L394.24 177.21L395.21 176.72L396.18 176.13L397.16 175.46L398.13 174.69L399.10 173.86L400.08 172.95L401.05 171.99L402.02 170.99L402.99 169.95L403.97 168.88L404.94 167.80L405.91 166.73L406.89 165.66L407.86 164.62L408.83 163.61L409.81 162.65L410.78 161.75L411.75 160.91L412.72 160.15L413.70 159.47L414.67 158.88L415.64 158.39L416.62 158.01L417.59 157.73L418.56 157.56L419.54 157.50L420.51 157.56L421.48 157.72L422.45 158.00L423.43 158.39L424.40 158.88L425.37 159.47L426.35 160.14L427.32 160.91L428.29 161.74L429.27 162.65L430.24 163.61L431.21 164.61L432.18 165.65L433.16 166.72L434.13 167.80L435.10 168.87L436.08 169.94L437.05 170.98L438.02 171.99L439.00 172.95L439.97 173.85L440.94 174.69L441.91 175.45L442.89 176.13L443.86 176.72L444.83 177.21L445.81 177.59L446.78 177.87L447.75 178.04L448.73 178.10L449.70 178.04L450.67 177.88L451.64 177.60L452.62 177.21L453.59 176.72L454.56 176.13L455.54 175.46L456.51 174.69L457.48 173.86L458.46 172.95L459.43 171.99L460.40 170.99L461.37 169.95L462.35 168.88L463.32 167.80L464.29 166.73L465.27 165.66L466.24 164.62L467.21 163.61L468.19 162.65L469.16 161.75L470.13 160.91L471.10 160.15L472.08 159.47L473.05 158.88L474.02 158.39L475.00 158.01L475.97 157.73L476.94 157.56L477.92 157.50L478.89 157.56L479.86 157.72L480.83 158.00L481.81 158.39L482.78 158.88L483.75 159.47L484.73 160.14L485.70 160.91L486.67 161.74L487.65 162.65L488.62 163.61L489.59 164.61L490.56 165.65L491.54 166.72L492.51 167.80L493.48 168.87L494.46 169.94L495.43 170.98L496.40 171.99L497.38 172.95L498.35 173.85L499.32 174.69L500.29 175.45L501.27 176.13L502.24 176.72L503.21 177.21L504.19 177.59L505.16 177.87L506.13 178.04L507.11 178.10L508.08 178.04L509.05 177.88L510.02 177.60L511.00 177.21L511.97 176.72L512.94 176.13L513.92 175.46L514.89 174.69L515.86 173.86L516.84 172.95L517.81 171.99L518.78 170.99L519.75 169.95L520.73 168.88L521.70 167.80L522.67 166.73L523.65 165.66L524.62 164.62L525.59 163.61L526.57 162.65L527.54 161.75L528.51 160.91L529.48 160.15L530.46 159.47L531.43 158.88L532.40 158.39L533.38 158.01L534.35 157.73L535.32 157.56L536.30 157.50L537.27 157.56L538.24 157.72L539.21 158.00L540.19 158.39L541.16 158.88L542.13 159.47L543.11 160.14L544.08 160.91L545.05 161.74L546.03 162.65L547.00 163.61L547.97 164.61L548.94 165.65L549.92 166.72L550.89 167.80L551.86 168.87L552.84 169.94L553.81 170.98L554.78 171.99L555.76 172.95L556.73 173.85L557.70 174.69L558.67 175.45L559.65 176.13L560.62 176.72L561.59 177.21L562.57 177.59L563.54 177.87L564.51 178.04L565.49 178.10L566.46 178.04L567.43 177.88L568.40 177.60L569.38 177.21L570.35 176.72L571.32 176.13L572.30 175.46L573.27 174.69L574.24 173.86L575.22 172.95L576.19 171.99L577.16 170.99L578.13 169.95L579.11 168.88L580.08 167.80L581.05 166.73L582.03 165.66L583.00 164.62L583.97 163.61L584.95 162.65L585.92 161.75L586.89 160.91L587.86 160.15L588.84 159.47L589.81 158.88L590.78 158.39L591.76 158.01L592.73 157.73L593.70 157.56L594.68 157.50L595.65 157.56L596.62 157.72L597.59 158.00L598.57 158.39L599.54 158.88L600.51 159.47L601.49 160.14L602.46 160.91L603.43 161.74L604.41 162.65L605.38 163.61L606.35 164.61L607.32 165.65L608.30 166.72L609.27 167.80L610.24 168.87L611.22 169.94L612.19 170.98L613.16 171.99L614.14 172.95L615.11 173.85L616.08 174.69L617.05 175.45L618.03 176.13L619.00 176.72L619.97 177.21L620.95 177.59L621.92 177.87L622.89 178.04L623.87 178.10L624.84 178.04L625.81 177.88L626.78 177.60L627.76 177.21L628.73 176.72L629.70 176.13L630.68 175.46L631.65 174.69L632.62 173.86L633.60 172.95L634.57 171.99L635.54 170.99L636.51 169.95L637.49 168.88L638.46 167.80L639.43 166.73L640.41 165.66L641.38 164.62L642.35 163.61L643.33 162.65L644.30 161.75L645.27 160.91L646.24 160.15L647.22 159.47L648.19 158.88L649.16 158.39L650.14 158.01L651.11 157.73L652.08 157.56L653.06 157.50L654.03 157.56L655.00 157.72L655.97 158.00L656.95 158.39L657.92 158.88L658.89 159.47L659.87 160.14L660.84 160.91L661.81 161.74L662.79 162.65L663.76 163.61L664.73 164.61L665.70 165.65L666.68 166.72L667.65 167.80L668.62 168.87L669.60 169.94L670.57 170.98L671.54 171.99L672.52 172.95L673.49 173.85L674.46 174.69L675.43 175.45L676.41 176.13L677.38 176.72L678.35 177.21L679.33 177.59L680.30 177.87L681.27 178.04L682.25 178.10L683.22 178.04L684.19 177.88L685.16 177.60L686.14 177.21L687.11 176.72L688.08 176.13L689.06 175.46L690.03 174.69L691.00 173.86L691.98 172.95L692.95 171.99L693.92 170.99L694.89 169.95L695.87 168.88L696.84 167.80L697.81 166.73L698.79 165.66L699.76 164.62L700.73 163.61L701.71 162.65L702.68 161.75L703.65 160.91L704.62 160.15L705.60 159.47L706.57 158.88L707.54 158.39L708.52 158.01L709.49 157.73L710.46 157.56L711.44 157.50L712.41 157.56L713.38 157.72L714.35 158.00L715.33 158.39L716.30 158.88" fill="none" stroke="#12c812" stroke-width="1"/><path d="M68 156.80H125.2L132.50 167.80L125.2 178.80H68" fill="#000" stroke="#10b010" stroke-width=".8"/><text x="71.30" y="168.44" font-size="4" fill="#12c812" stroke="#12c812" stroke-width="0.18">3</text><text x="77.00" y="160.98" font-size="4.4" fill="#e8e8e8" stroke="#e8e8e8" stroke-width="0.08">L0-Ub</text><text x="77.00" y="166.38" font-size="4.4" fill="#e8e8e8" stroke="#e8e8e8" stroke-width="0.08">幅值:100.0982kV</text><text x="77.00" y="171.78" font-size="4.4" fill="#e8e8e8" stroke="#e8e8e8" stroke-width="0.08">相位:119.9822°</text><text x="77.00" y="177.18" font-size="4.4" fill="#e8e8e8" stroke="#e8e8e8" stroke-width="0.08">频率:50.0077Hz</text><rect x="114.7" y="159.00" width="5.6" height="5.2" rx="1" fill="none" stroke="#10b010" stroke-width=".7"/><text x="114.40" y="170.31" font-size="4.2" fill="#12c812" stroke="#12c812" stroke-width="0.18">L0-Ub</text><path d="M716.30 167.80L719.4 164.50H742.4Q743.2 164.50 743.2 165.30V170.30Q743.2 171.10 742.4 171.10H719.4Z" fill="#000" stroke="#10b010" stroke-width=".8"/><text x="731.00" y="169.13" font-size="3.7" fill="#f4f4f4" stroke="#f4f4f4" stroke-width="0.18" text-anchor="middle">0.000kV</text><path d="M132.50 204.00H716.30" stroke="#484848" stroke-width="1"/><path d="M132.50 204.00H716.30" stroke="#12c812" stroke-width=".8" stroke-dasharray="1.4 1" opacity=".8"/><path d="M132.50 195.08L133.47 195.67L134.45 196.35L135.42 197.11L136.39 197.95L137.37 198.85L138.34 199.81L139.31 200.82L140.28 201.86L141.26 202.93L142.23 204.00L143.20 205.08L144.18 206.15L145.15 207.19L146.12 208.19L147.09 209.15L148.07 210.06L149.04 210.89L150.01 211.66L150.99 212.33L151.96 212.92L152.93 213.41L153.91 213.80L154.88 214.08L155.85 214.24L156.82 214.30L157.80 214.24L158.77 214.07L159.74 213.79L160.72 213.41L161.69 212.92L162.66 212.33L163.64 211.65L164.61 210.89L165.58 210.05L166.56 209.15L167.53 208.19L168.50 207.18L169.47 206.14L170.45 205.07L171.42 204.00L172.39 202.92L173.37 201.85L174.34 200.81L175.31 199.81L176.28 198.85L177.26 197.94L178.23 197.11L179.20 196.34L180.18 195.67L181.15 195.08L182.12 194.59L183.10 194.20L184.07 193.92L185.04 193.76L186.02 193.70L186.99 193.76L187.96 193.93L188.93 194.21L189.91 194.59L190.88 195.08L191.85 195.67L192.83 196.35L193.80 197.11L194.77 197.95L195.75 198.85L196.72 199.81L197.69 200.82L198.66 201.86L199.64 202.93L200.61 204.00L201.58 205.08L202.56 206.15L203.53 207.19L204.50 208.19L205.48 209.15L206.45 210.06L207.42 210.89L208.39 211.66L209.37 212.33L210.34 212.92L211.31 213.41L212.29 213.80L213.26 214.08L214.23 214.24L215.21 214.30L216.18 214.24L217.15 214.07L218.12 213.79L219.10 213.41L220.07 212.92L221.04 212.33L222.02 211.65L222.99 210.89L223.96 210.05L224.94 209.15L225.91 208.19L226.88 207.18L227.85 206.14L228.83 205.07L229.80 204.00L230.77 202.92L231.75 201.85L232.72 200.81L233.69 199.81L234.67 198.85L235.64 197.94L236.61 197.11L237.58 196.34L238.56 195.67L239.53 195.08L240.50 194.59L241.48 194.20L242.45 193.92L243.42 193.76L244.40 193.70L245.37 193.76L246.34 193.93L247.31 194.21L248.29 194.59L249.26 195.08L250.23 195.67L251.21 196.35L252.18 197.11L253.15 197.95L254.13 198.85L255.10 199.81L256.07 200.82L257.04 201.86L258.02 202.93L258.99 204.00L259.96 205.08L260.94 206.15L261.91 207.19L262.88 208.19L263.86 209.15L264.83 210.06L265.80 210.89L266.77 211.66L267.75 212.33L268.72 212.92L269.69 213.41L270.67 213.80L271.64 214.08L272.61 214.24L273.59 214.30L274.56 214.24L275.53 214.07L276.50 213.79L277.48 213.41L278.45 212.92L279.42 212.33L280.40 211.65L281.37 210.89L282.34 210.05L283.32 209.15L284.29 208.19L285.26 207.18L286.23 206.14L287.21 205.07L288.18 204.00L289.15 202.92L290.13 201.85L291.10 200.81L292.07 199.81L293.05 198.85L294.02 197.94L294.99 197.11L295.96 196.34L296.94 195.67L297.91 195.08L298.88 194.59L299.86 194.20L300.83 193.92L301.80 193.76L302.78 193.70L303.75 193.76L304.72 193.93L305.69 194.21L306.67 194.59L307.64 195.08L308.61 195.67L309.59 196.35L310.56 197.11L311.53 197.95L312.50 198.85L313.48 199.81L314.45 200.82L315.42 201.86L316.40 202.93L317.37 204.00L318.34 205.08L319.32 206.15L320.29 207.19L321.26 208.19L322.24 209.15L323.21 210.06L324.18 210.89L325.15 211.66L326.13 212.33L327.10 212.92L328.07 213.41L329.05 213.80L330.02 214.08L330.99 214.24L331.97 214.30L332.94 214.24L333.91 214.07L334.88 213.79L335.86 213.41L336.83 212.92L337.80 212.33L338.78 211.65L339.75 210.89L340.72 210.05L341.70 209.15L342.67 208.19L343.64 207.18L344.61 206.14L345.59 205.07L346.56 204.00L347.53 202.92L348.51 201.85L349.48 200.81L350.45 199.81L351.43 198.85L352.40 197.94L353.37 197.11L354.34 196.34L355.32 195.67L356.29 195.08L357.26 194.59L358.24 194.20L359.21 193.92L360.18 193.76L361.16 193.70L362.13 193.76L363.10 193.93L364.07 194.21L365.05 194.59L366.02 195.08L366.99 195.67L367.97 196.35L368.94 197.11L369.91 197.95L370.89 198.85L371.86 199.81L372.83 200.82L373.80 201.86L374.78 202.93L375.75 204.00L376.72 205.08L377.70 206.15L378.67 207.19L379.64 208.19L380.62 209.15L381.59 210.06L382.56 210.89L383.53 211.66L384.51 212.33L385.48 212.92L386.45 213.41L387.43 213.80L388.40 214.08L389.37 214.24L390.35 214.30L391.32 214.24L392.29 214.07L393.26 213.79L394.24 213.41L395.21 212.92L396.18 212.33L397.16 211.65L398.13 210.89L399.10 210.05L400.08 209.15L401.05 208.19L402.02 207.18L402.99 206.14L403.97 205.07L404.94 204.00L405.91 202.92L406.89 201.85L407.86 200.81L408.83 199.81L409.81 198.85L410.78 197.94L411.75 197.11L412.72 196.34L413.70 195.67L414.67 195.08L415.64 194.59L416.62 194.20L417.59 193.92L418.56 193.76L419.54 193.70L420.51 193.76L421.48 193.93L422.45 194.21L423.43 194.59L424.40 195.08L425.37 195.67L426.35 196.35L427.32 197.11L428.29 197.95L429.27 198.85L430.24 199.81L431.21 200.82L432.18 201.86L433.16 202.93L434.13 204.00L435.10 205.08L436.08 206.15L437.05 207.19L438.02 208.19L439.00 209.15L439.97 210.06L440.94 210.89L441.91 211.66L442.89 212.33L443.86 212.92L444.83 213.41L445.81 213.80L446.78 214.08L447.75 214.24L448.73 214.30L449.70 214.24L450.67 214.07L451.64 213.79L452.62 213.41L453.59 212.92L454.56 212.33L455.54 211.65L456.51 210.89L457.48 210.05L458.46 209.15L459.43 208.19L460.40 207.18L461.37 206.14L462.35 205.07L463.32 204.00L464.29 202.92L465.27 201.85L466.24 200.81L467.21 199.81L468.19 198.85L469.16 197.94L470.13 197.11L471.10 196.34L472.08 195.67L473.05 195.08L474.02 194.59L475.00 194.20L475.97 193.92L476.94 193.76L477.92 193.70L478.89 193.76L479.86 193.93L480.83 194.21L481.81 194.59L482.78 195.08L483.75 195.67L484.73 196.35L485.70 197.11L486.67 197.95L487.65 198.85L488.62 199.81L489.59 200.82L490.56 201.86L491.54 202.93L492.51 204.00L493.48 205.08L494.46 206.15L495.43 207.19L496.40 208.19L497.38 209.15L498.35 210.06L499.32 210.89L500.29 211.66L501.27 212.33L502.24 212.92L503.21 213.41L504.19 213.80L505.16 214.08L506.13 214.24L507.11 214.30L508.08 214.24L509.05 214.07L510.02 213.79L511.00 213.41L511.97 212.92L512.94 212.33L513.92 211.65L514.89 210.89L515.86 210.05L516.84 209.15L517.81 208.19L518.78 207.18L519.75 206.14L520.73 205.07L521.70 204.00L522.67 202.92L523.65 201.85L524.62 200.81L525.59 199.81L526.57 198.85L527.54 197.94L528.51 197.11L529.48 196.34L530.46 195.67L531.43 195.08L532.40 194.59L533.38 194.20L534.35 193.92L535.32 193.76L536.30 193.70L537.27 193.76L538.24 193.93L539.21 194.21L540.19 194.59L541.16 195.08L542.13 195.67L543.11 196.35L544.08 197.11L545.05 197.95L546.03 198.85L547.00 199.81L547.97 200.82L548.94 201.86L549.92 202.93L550.89 204.00L551.86 205.08L552.84 206.15L553.81 207.19L554.78 208.19L555.76 209.15L556.73 210.06L557.70 210.89L558.67 211.66L559.65 212.33L560.62 212.92L561.59 213.41L562.57 213.80L563.54 214.08L564.51 214.24L565.49 214.30L566.46 214.24L567.43 214.07L568.40 213.79L569.38 213.41L570.35 212.92L571.32 212.33L572.30 211.65L573.27 210.89L574.24 210.05L575.22 209.15L576.19 208.19L577.16 207.18L578.13 206.14L579.11 205.07L580.08 204.00L581.05 202.92L582.03 201.85L583.00 200.81L583.97 199.81L584.95 198.85L585.92 197.94L586.89 197.11L587.86 196.34L588.84 195.67L589.81 195.08L590.78 194.59L591.76 194.20L592.73 193.92L593.70 193.76L594.68 193.70L595.65 193.76L596.62 193.93L597.59 194.21L598.57 194.59L599.54 195.08L600.51 195.67L601.49 196.35L602.46 197.11L603.43 197.95L604.41 198.85L605.38 199.81L606.35 200.82L607.32 201.86L608.30 202.93L609.27 204.00L610.24 205.08L611.22 206.15L612.19 207.19L613.16 208.19L614.14 209.15L615.11 210.06L616.08 210.89L617.05 211.66L618.03 212.33L619.00 212.92L619.97 213.41L620.95 213.80L621.92 214.08L622.89 214.24L623.87 214.30L624.84 214.24L625.81 214.07L626.78 213.79L627.76 213.41L628.73 212.92L629.70 212.33L630.68 211.65L631.65 210.89L632.62 210.05L633.60 209.15L634.57 208.19L635.54 207.18L636.51 206.14L637.49 205.07L638.46 204.00L639.43 202.92L640.41 201.85L641.38 200.81L642.35 199.81L643.33 198.85L644.30 197.94L645.27 197.11L646.24 196.34L647.22 195.67L648.19 195.08L649.16 194.59L650.14 194.20L651.11 193.92L652.08 193.76L653.06 193.70L654.03 193.76L655.00 193.93L655.97 194.21L656.95 194.59L657.92 195.08L658.89 195.67L659.87 196.35L660.84 197.11L661.81 197.95L662.79 198.85L663.76 199.81L664.73 200.82L665.70 201.86L666.68 202.93L667.65 204.00L668.62 205.08L669.60 206.15L670.57 207.19L671.54 208.19L672.52 209.15L673.49 210.06L674.46 210.89L675.43 211.66L676.41 212.33L677.38 212.92L678.35 213.41L679.33 213.80L680.30 214.08L681.27 214.24L682.25 214.30L683.22 214.24L684.19 214.07L685.16 213.79L686.14 213.41L687.11 212.92L688.08 212.33L689.06 211.65L690.03 210.89L691.00 210.05L691.98 209.15L692.95 208.19L693.92 207.18L694.89 206.14L695.87 205.07L696.84 204.00L697.81 202.92L698.79 201.85L699.76 200.81L700.73 199.81L701.71 198.85L702.68 197.94L703.65 197.11L704.62 196.34L705.60 195.67L706.57 195.08L707.54 194.59L708.52 194.20L709.49 193.92L710.46 193.76L711.44 193.70L712.41 193.76L713.38 193.93L714.35 194.21L715.33 194.59L716.30 195.08" fill="none" stroke="#12c812" stroke-width="1"/><path d="M68 193.00H125.2L132.50 204.00L125.2 215.00H68" fill="#000" stroke="#10b010" stroke-width=".8"/><text x="71.30" y="204.64" font-size="4" fill="#12c812" stroke="#12c812" stroke-width="0.18">4</text><text x="77.00" y="197.18" font-size="4.4" fill="#e8e8e8" stroke="#e8e8e8" stroke-width="0.08">L0-Ib</text><text x="77.00" y="202.58" font-size="4.4" fill="#e8e8e8" stroke="#e8e8e8" stroke-width="0.08">幅值:4.9971kA</text><text x="77.00" y="207.98" font-size="4.4" fill="#e8e8e8" stroke="#e8e8e8" stroke-width="0.08">相位:120.0182°</text><text x="77.00" y="213.38" font-size="4.4" fill="#e8e8e8" stroke="#e8e8e8" stroke-width="0.08">频率:50.0069Hz</text><rect x="114.7" y="195.20" width="5.6" height="5.2" rx="1" fill="none" stroke="#10b010" stroke-width=".7"/><text x="114.40" y="206.51" font-size="4.2" fill="#12c812" stroke="#12c812" stroke-width="0.18">L0-Ib</text><path d="M716.30 204.00L719.4 200.70H742.4Q743.2 200.70 743.2 201.50V206.50Q743.2 207.30 742.4 207.30H719.4Z" fill="#000" stroke="#10b010" stroke-width=".8"/><text x="731.00" y="205.33" font-size="3.7" fill="#f4f4f4" stroke="#f4f4f4" stroke-width="0.18" text-anchor="middle">0.000kA</text><path d="M132.50 240.20H716.30" stroke="#484848" stroke-width="1"/><path d="M132.50 240.20H716.30" stroke="#e01818" stroke-width=".8" stroke-dasharray="1.4 1" opacity=".8"/><path d="M132.50 249.13L133.47 249.62L134.45 250.00L135.42 250.28L136.39 250.45L137.37 250.50L138.34 250.44L139.31 250.27L140.28 249.99L141.26 249.60L142.23 249.11L143.20 248.52L144.18 247.84L145.15 247.07L146.12 246.24L147.09 245.33L148.07 244.37L149.04 243.36L150.01 242.32L150.99 241.25L151.96 240.18L152.93 239.10L153.91 238.04L154.88 236.99L155.85 235.99L156.82 235.03L157.80 234.13L158.77 233.29L159.74 232.53L160.72 231.85L161.69 231.27L162.66 230.78L163.64 230.40L164.61 230.12L165.58 229.95L166.56 229.90L167.53 229.96L168.50 230.13L169.47 230.41L170.45 230.80L171.42 231.29L172.39 231.88L173.37 232.56L174.34 233.33L175.31 234.16L176.28 235.07L177.26 236.03L178.23 237.04L179.20 238.08L180.18 239.15L181.15 240.22L182.12 241.30L183.10 242.36L184.07 243.41L185.04 244.41L186.02 245.37L186.99 246.27L187.96 247.11L188.93 247.87L189.91 248.55L190.88 249.13L191.85 249.62L192.83 250.00L193.80 250.28L194.77 250.45L195.75 250.50L196.72 250.44L197.69 250.27L198.66 249.99L199.64 249.60L200.61 249.11L201.58 248.52L202.56 247.84L203.53 247.07L204.50 246.24L205.48 245.33L206.45 244.37L207.42 243.36L208.39 242.32L209.37 241.25L210.34 240.18L211.31 239.10L212.29 238.04L213.26 236.99L214.23 235.99L215.21 235.03L216.18 234.13L217.15 233.29L218.12 232.53L219.10 231.85L220.07 231.27L221.04 230.78L222.02 230.40L222.99 230.12L223.96 229.95L224.94 229.90L225.91 229.96L226.88 230.13L227.85 230.41L228.83 230.80L229.80 231.29L230.77 231.88L231.75 232.56L232.72 233.33L233.69 234.16L234.67 235.07L235.64 236.03L236.61 237.04L237.58 238.08L238.56 239.15L239.53 240.22L240.50 241.30L241.48 242.36L242.45 243.41L243.42 244.41L244.40 245.37L245.37 246.27L246.34 247.11L247.31 247.87L248.29 248.55L249.26 249.13L250.23 249.62L251.21 250.00L252.18 250.28L253.15 250.45L254.13 250.50L255.10 250.44L256.07 250.27L257.04 249.99L258.02 249.60L258.99 249.11L259.96 248.52L260.94 247.84L261.91 247.07L262.88 246.24L263.86 245.33L264.83 244.37L265.80 243.36L266.77 242.32L267.75 241.25L268.72 240.18L269.69 239.10L270.67 238.04L271.64 236.99L272.61 235.99L273.59 235.03L274.56 234.13L275.53 233.29L276.50 232.53L277.48 231.85L278.45 231.27L279.42 230.78L280.40 230.40L281.37 230.12L282.34 229.95L283.32 229.90L284.29 229.96L285.26 230.13L286.23 230.41L287.21 230.80L288.18 231.29L289.15 231.88L290.13 232.56L291.10 233.33L292.07 234.16L293.05 235.07L294.02 236.03L294.99 237.04L295.96 238.08L296.94 239.15L297.91 240.22L298.88 241.30L299.86 242.36L300.83 243.41L301.80 244.41L302.78 245.37L303.75 246.27L304.72 247.11L305.69 247.87L306.67 248.55L307.64 249.13L308.61 249.62L309.59 250.00L310.56 250.28L311.53 250.45L312.50 250.50L313.48 250.44L314.45 250.27L315.42 249.99L316.40 249.60L317.37 249.11L318.34 248.52L319.32 247.84L320.29 247.07L321.26 246.24L322.24 245.33L323.21 244.37L324.18 243.36L325.15 242.32L326.13 241.25L327.10 240.18L328.07 239.10L329.05 238.04L330.02 236.99L330.99 235.99L331.97 235.03L332.94 234.13L333.91 233.29L334.88 232.53L335.86 231.85L336.83 231.27L337.80 230.78L338.78 230.40L339.75 230.12L340.72 229.95L341.70 229.90L342.67 229.96L343.64 230.13L344.61 230.41L345.59 230.80L346.56 231.29L347.53 231.88L348.51 232.56L349.48 233.33L350.45 234.16L351.43 235.07L352.40 236.03L353.37 237.04L354.34 238.08L355.32 239.15L356.29 240.22L357.26 241.30L358.24 242.36L359.21 243.41L360.18 244.41L361.16 245.37L362.13 246.27L363.10 247.11L364.07 247.87L365.05 248.55L366.02 249.13L366.99 249.62L367.97 250.00L368.94 250.28L369.91 250.45L370.89 250.50L371.86 250.44L372.83 250.27L373.80 249.99L374.78 249.60L375.75 249.11L376.72 248.52L377.70 247.84L378.67 247.07L379.64 246.24L380.62 245.33L381.59 244.37L382.56 243.36L383.53 242.32L384.51 241.25L385.48 240.18L386.45 239.10L387.43 238.04L388.40 236.99L389.37 235.99L390.35 235.03L391.32 234.13L392.29 233.29L393.26 232.53L394.24 231.85L395.21 231.27L396.18 230.78L397.16 230.40L398.13 230.12L399.10 229.95L400.08 229.90L401.05 229.96L402.02 230.13L402.99 230.41L403.97 230.80L404.94 231.29L405.91 231.88L406.89 232.56L407.86 233.33L408.83 234.16L409.81 235.07L410.78 236.03L411.75 237.04L412.72 238.08L413.70 239.15L414.67 240.22L415.64 241.30L416.62 242.36L417.59 243.41L418.56 244.41L419.54 245.37L420.51 246.27L421.48 247.11L422.45 247.87L423.43 248.55L424.40 249.13L425.37 249.62L426.35 250.00L427.32 250.28L428.29 250.45L429.27 250.50L430.24 250.44L431.21 250.27L432.18 249.99L433.16 249.60L434.13 249.11L435.10 248.52L436.08 247.84L437.05 247.07L438.02 246.24L439.00 245.33L439.97 244.37L440.94 243.36L441.91 242.32L442.89 241.25L443.86 240.18L444.83 239.10L445.81 238.04L446.78 236.99L447.75 235.99L448.73 235.03L449.70 234.13L450.67 233.29L451.64 232.53L452.62 231.85L453.59 231.27L454.56 230.78L455.54 230.40L456.51 230.12L457.48 229.95L458.46 229.90L459.43 229.96L460.40 230.13L461.37 230.41L462.35 230.80L463.32 231.29L464.29 231.88L465.27 232.56L466.24 233.33L467.21 234.16L468.19 235.07L469.16 236.03L470.13 237.04L471.10 238.08L472.08 239.15L473.05 240.22L474.02 241.30L475.00 242.36L475.97 243.41L476.94 244.41L477.92 245.37L478.89 246.27L479.86 247.11L480.83 247.87L481.81 248.55L482.78 249.13L483.75 249.62L484.73 250.00L485.70 250.28L486.67 250.45L487.65 250.50L488.62 250.44L489.59 250.27L490.56 249.99L491.54 249.60L492.51 249.11L493.48 248.52L494.46 247.84L495.43 247.07L496.40 246.24L497.38 245.33L498.35 244.37L499.32 243.36L500.29 242.32L501.27 241.25L502.24 240.18L503.21 239.10L504.19 238.04L505.16 236.99L506.13 235.99L507.11 235.03L508.08 234.13L509.05 233.29L510.02 232.53L511.00 231.85L511.97 231.27L512.94 230.78L513.92 230.40L514.89 230.12L515.86 229.95L516.84 229.90L517.81 229.96L518.78 230.13L519.75 230.41L520.73 230.80L521.70 231.29L522.67 231.88L523.65 232.56L524.62 233.33L525.59 234.16L526.57 235.07L527.54 236.03L528.51 237.04L529.48 238.08L530.46 239.15L531.43 240.22L532.40 241.30L533.38 242.36L534.35 243.41L535.32 244.41L536.30 245.37L537.27 246.27L538.24 247.11L539.21 247.87L540.19 248.55L541.16 249.13L542.13 249.62L543.11 250.00L544.08 250.28L545.05 250.45L546.03 250.50L547.00 250.44L547.97 250.27L548.94 249.99L549.92 249.60L550.89 249.11L551.86 248.52L552.84 247.84L553.81 247.07L554.78 246.24L555.76 245.33L556.73 244.37L557.70 243.36L558.67 242.32L559.65 241.25L560.62 240.18L561.59 239.10L562.57 238.04L563.54 236.99L564.51 235.99L565.49 235.03L566.46 234.13L567.43 233.29L568.40 232.53L569.38 231.85L570.35 231.27L571.32 230.78L572.30 230.40L573.27 230.12L574.24 229.95L575.22 229.90L576.19 229.96L577.16 230.13L578.13 230.41L579.11 230.80L580.08 231.29L581.05 231.88L582.03 232.56L583.00 233.33L583.97 234.16L584.95 235.07L585.92 236.03L586.89 237.04L587.86 238.08L588.84 239.15L589.81 240.22L590.78 241.30L591.76 242.36L592.73 243.41L593.70 244.41L594.68 245.37L595.65 246.27L596.62 247.11L597.59 247.87L598.57 248.55L599.54 249.13L600.51 249.62L601.49 250.00L602.46 250.28L603.43 250.45L604.41 250.50L605.38 250.44L606.35 250.27L607.32 249.99L608.30 249.60L609.27 249.11L610.24 248.52L611.22 247.84L612.19 247.07L613.16 246.24L614.14 245.33L615.11 244.37L616.08 243.36L617.05 242.32L618.03 241.25L619.00 240.18L619.97 239.10L620.95 238.04L621.92 236.99L622.89 235.99L623.87 235.03L624.84 234.13L625.81 233.29L626.78 232.53L627.76 231.85L628.73 231.27L629.70 230.78L630.68 230.40L631.65 230.12L632.62 229.95L633.60 229.90L634.57 229.96L635.54 230.13L636.51 230.41L637.49 230.80L638.46 231.29L639.43 231.88L640.41 232.56L641.38 233.33L642.35 234.16L643.33 235.07L644.30 236.03L645.27 237.04L646.24 238.08L647.22 239.15L648.19 240.22L649.16 241.30L650.14 242.36L651.11 243.41L652.08 244.41L653.06 245.37L654.03 246.27L655.00 247.11L655.97 247.87L656.95 248.55L657.92 249.13L658.89 249.62L659.87 250.00L660.84 250.28L661.81 250.45L662.79 250.50L663.76 250.44L664.73 250.27L665.70 249.99L666.68 249.60L667.65 249.11L668.62 248.52L669.60 247.84L670.57 247.07L671.54 246.24L672.52 245.33L673.49 244.37L674.46 243.36L675.43 242.32L676.41 241.25L677.38 240.18L678.35 239.10L679.33 238.04L680.30 236.99L681.27 235.99L682.25 235.03L683.22 234.13L684.19 233.29L685.16 232.53L686.14 231.85L687.11 231.27L688.08 230.78L689.06 230.40L690.03 230.12L691.00 229.95L691.98 229.90L692.95 229.96L693.92 230.13L694.89 230.41L695.87 230.80L696.84 231.29L697.81 231.88L698.79 232.56L699.76 233.33L700.73 234.16L701.71 235.07L702.68 236.03L703.65 237.04L704.62 238.08L705.60 239.15L706.57 240.22L707.54 241.30L708.52 242.36L709.49 243.41L710.46 244.41L711.44 245.37L712.41 246.27L713.38 247.11L714.35 247.87L715.33 248.55L716.30 249.13" fill="none" stroke="#e01818" stroke-width="1"/><path d="M68 229.20H125.2L132.50 240.20L125.2 251.20H68" fill="#000" stroke="#c81414" stroke-width=".8"/><text x="71.30" y="240.84" font-size="4" fill="#e01818" stroke="#e01818" stroke-width="0.18">5</text><text x="77.00" y="233.38" font-size="4.4" fill="#e8e8e8" stroke="#e8e8e8" stroke-width="0.08">L0-Uc</text><text x="77.00" y="238.78" font-size="4.4" fill="#e8e8e8" stroke="#e8e8e8" stroke-width="0.08">幅值:100.1939kV</text><text x="77.00" y="244.18" font-size="4.4" fill="#e8e8e8" stroke="#e8e8e8" stroke-width="0.08">相位:-119.8704°</text><text x="77.00" y="249.58" font-size="4.4" fill="#e8e8e8" stroke="#e8e8e8" stroke-width="0.08">频率:50.0041Hz</text><rect x="114.7" y="231.40" width="5.6" height="5.2" rx="1" fill="none" stroke="#c81414" stroke-width=".7"/><text x="114.40" y="242.71" font-size="4.2" fill="#e01818" stroke="#e01818" stroke-width="0.18">L0-Uc</text><path d="M716.30 240.20L719.4 236.90H742.4Q743.2 236.90 743.2 237.70V242.70Q743.2 243.50 742.4 243.50H719.4Z" fill="#000" stroke="#c81414" stroke-width=".8"/><text x="731.00" y="241.53" font-size="3.7" fill="#f4f4f4" stroke="#f4f4f4" stroke-width="0.18" text-anchor="middle">0.000kV</text><path d="M132.50 276.40H716.30" stroke="#484848" stroke-width="1"/><path d="M132.50 276.40H716.30" stroke="#e01818" stroke-width=".8" stroke-dasharray="1.4 1" opacity=".8"/><path d="M132.50 285.33L133.47 285.82L134.45 286.20L135.42 286.48L136.39 286.65L137.37 286.70L138.34 286.64L139.31 286.47L140.28 286.19L141.26 285.80L142.23 285.31L143.20 284.72L144.18 284.04L145.15 283.27L146.12 282.43L147.09 281.53L148.07 280.56L149.04 279.56L150.01 278.52L150.99 277.45L151.96 276.37L152.93 275.30L153.91 274.23L154.88 273.19L155.85 272.19L156.82 271.23L157.80 270.32L158.77 269.49L159.74 268.73L160.72 268.05L161.69 267.47L162.66 266.98L163.64 266.60L164.61 266.32L165.58 266.15L166.56 266.10L167.53 266.16L168.50 266.33L169.47 266.61L170.45 267.00L171.42 267.49L172.39 268.08L173.37 268.76L174.34 269.53L175.31 270.37L176.28 271.27L177.26 272.24L178.23 273.24L179.20 274.28L180.18 275.35L181.15 276.43L182.12 277.50L183.10 278.57L184.07 279.61L185.04 280.61L186.02 281.57L186.99 282.48L187.96 283.31L188.93 284.07L189.91 284.75L190.88 285.33L191.85 285.82L192.83 286.20L193.80 286.48L194.77 286.65L195.75 286.70L196.72 286.64L197.69 286.47L198.66 286.19L199.64 285.80L200.61 285.31L201.58 284.72L202.56 284.04L203.53 283.27L204.50 282.43L205.48 281.53L206.45 280.56L207.42 279.56L208.39 278.52L209.37 277.45L210.34 276.37L211.31 275.30L212.29 274.23L213.26 273.19L214.23 272.19L215.21 271.23L216.18 270.32L217.15 269.49L218.12 268.73L219.10 268.05L220.07 267.47L221.04 266.98L222.02 266.60L222.99 266.32L223.96 266.15L224.94 266.10L225.91 266.16L226.88 266.33L227.85 266.61L228.83 267.00L229.80 267.49L230.77 268.08L231.75 268.76L232.72 269.53L233.69 270.37L234.67 271.27L235.64 272.24L236.61 273.24L237.58 274.28L238.56 275.35L239.53 276.43L240.50 277.50L241.48 278.57L242.45 279.61L243.42 280.61L244.40 281.57L245.37 282.48L246.34 283.31L247.31 284.07L248.29 284.75L249.26 285.33L250.23 285.82L251.21 286.20L252.18 286.48L253.15 286.65L254.13 286.70L255.10 286.64L256.07 286.47L257.04 286.19L258.02 285.80L258.99 285.31L259.96 284.72L260.94 284.04L261.91 283.27L262.88 282.43L263.86 281.53L264.83 280.56L265.80 279.56L266.77 278.52L267.75 277.45L268.72 276.37L269.69 275.30L270.67 274.23L271.64 273.19L272.61 272.19L273.59 271.23L274.56 270.32L275.53 269.49L276.50 268.73L277.48 268.05L278.45 267.47L279.42 266.98L280.40 266.60L281.37 266.32L282.34 266.15L283.32 266.10L284.29 266.16L285.26 266.33L286.23 266.61L287.21 267.00L288.18 267.49L289.15 268.08L290.13 268.76L291.10 269.53L292.07 270.37L293.05 271.27L294.02 272.24L294.99 273.24L295.96 274.28L296.94 275.35L297.91 276.43L298.88 277.50L299.86 278.57L300.83 279.61L301.80 280.61L302.78 281.57L303.75 282.48L304.72 283.31L305.69 284.07L306.67 284.75L307.64 285.33L308.61 285.82L309.59 286.20L310.56 286.48L311.53 286.65L312.50 286.70L313.48 286.64L314.45 286.47L315.42 286.19L316.40 285.80L317.37 285.31L318.34 284.72L319.32 284.04L320.29 283.27L321.26 282.43L322.24 281.53L323.21 280.56L324.18 279.56L325.15 278.52L326.13 277.45L327.10 276.37L328.07 275.30L329.05 274.23L330.02 273.19L330.99 272.19L331.97 271.23L332.94 270.32L333.91 269.49L334.88 268.73L335.86 268.05L336.83 267.47L337.80 266.98L338.78 266.60L339.75 266.32L340.72 266.15L341.70 266.10L342.67 266.16L343.64 266.33L344.61 266.61L345.59 267.00L346.56 267.49L347.53 268.08L348.51 268.76L349.48 269.53L350.45 270.37L351.43 271.27L352.40 272.24L353.37 273.24L354.34 274.28L355.32 275.35L356.29 276.43L357.26 277.50L358.24 278.57L359.21 279.61L360.18 280.61L361.16 281.57L362.13 282.48L363.10 283.31L364.07 284.07L365.05 284.75L366.02 285.33L366.99 285.82L367.97 286.20L368.94 286.48L369.91 286.65L370.89 286.70L371.86 286.64L372.83 286.47L373.80 286.19L374.78 285.80L375.75 285.31L376.72 284.72L377.70 284.04L378.67 283.27L379.64 282.43L380.62 281.53L381.59 280.56L382.56 279.56L383.53 278.52L384.51 277.45L385.48 276.37L386.45 275.30L387.43 274.23L388.40 273.19L389.37 272.19L390.35 271.23L391.32 270.32L392.29 269.49L393.26 268.73L394.24 268.05L395.21 267.47L396.18 266.98L397.16 266.60L398.13 266.32L399.10 266.15L400.08 266.10L401.05 266.16L402.02 266.33L402.99 266.61L403.97 267.00L404.94 267.49L405.91 268.08L406.89 268.76L407.86 269.53L408.83 270.37L409.81 271.27L410.78 272.24L411.75 273.24L412.72 274.28L413.70 275.35L414.67 276.43L415.64 277.50L416.62 278.57L417.59 279.61L418.56 280.61L419.54 281.57L420.51 282.48L421.48 283.31L422.45 284.07L423.43 284.75L424.40 285.33L425.37 285.82L426.35 286.20L427.32 286.48L428.29 286.65L429.27 286.70L430.24 286.64L431.21 286.47L432.18 286.19L433.16 285.80L434.13 285.31L435.10 284.72L436.08 284.04L437.05 283.27L438.02 282.43L439.00 281.53L439.97 280.56L440.94 279.56L441.91 278.52L442.89 277.45L443.86 276.37L444.83 275.30L445.81 274.23L446.78 273.19L447.75 272.19L448.73 271.23L449.70 270.32L450.67 269.49L451.64 268.73L452.62 268.05L453.59 267.47L454.56 266.98L455.54 266.60L456.51 266.32L457.48 266.15L458.46 266.10L459.43 266.16L460.40 266.33L461.37 266.61L462.35 267.00L463.32 267.49L464.29 268.08L465.27 268.76L466.24 269.53L467.21 270.37L468.19 271.27L469.16 272.24L470.13 273.24L471.10 274.28L472.08 275.35L473.05 276.43L474.02 277.50L475.00 278.57L475.97 279.61L476.94 280.61L477.92 281.57L478.89 282.48L479.86 283.31L480.83 284.07L481.81 284.75L482.78 285.33L483.75 285.82L484.73 286.20L485.70 286.48L486.67 286.65L487.65 286.70L488.62 286.64L489.59 286.47L490.56 286.19L491.54 285.80L492.51 285.31L493.48 284.72L494.46 284.04L495.43 283.27L496.40 282.43L497.38 281.53L498.35 280.56L499.32 279.56L500.29 278.52L501.27 277.45L502.24 276.37L503.21 275.30L504.19 274.23L505.16 273.19L506.13 272.19L507.11 271.23L508.08 270.32L509.05 269.49L510.02 268.73L511.00 268.05L511.97 267.47L512.94 266.98L513.92 266.60L514.89 266.32L515.86 266.15L516.84 266.10L517.81 266.16L518.78 266.33L519.75 266.61L520.73 267.00L521.70 267.49L522.67 268.08L523.65 268.76L524.62 269.53L525.59 270.37L526.57 271.27L527.54 272.24L528.51 273.24L529.48 274.28L530.46 275.35L531.43 276.43L532.40 277.50L533.38 278.57L534.35 279.61L535.32 280.61L536.30 281.57L537.27 282.48L538.24 283.31L539.21 284.07L540.19 284.75L541.16 285.33L542.13 285.82L543.11 286.20L544.08 286.48L545.05 286.65L546.03 286.70L547.00 286.64L547.97 286.47L548.94 286.19L549.92 285.80L550.89 285.31L551.86 284.72L552.84 284.04L553.81 283.27L554.78 282.43L555.76 281.53L556.73 280.56L557.70 279.56L558.67 278.52L559.65 277.45L560.62 276.37L561.59 275.30L562.57 274.23L563.54 273.19L564.51 272.19L565.49 271.23L566.46 270.32L567.43 269.49L568.40 268.73L569.38 268.05L570.35 267.47L571.32 266.98L572.30 266.60L573.27 266.32L574.24 266.15L575.22 266.10L576.19 266.16L577.16 266.33L578.13 266.61L579.11 267.00L580.08 267.49L581.05 268.08L582.03 268.76L583.00 269.53L583.97 270.37L584.95 271.27L585.92 272.24L586.89 273.24L587.86 274.28L588.84 275.35L589.81 276.43L590.78 277.50L591.76 278.57L592.73 279.61L593.70 280.61L594.68 281.57L595.65 282.48L596.62 283.31L597.59 284.07L598.57 284.75L599.54 285.33L600.51 285.82L601.49 286.20L602.46 286.48L603.43 286.65L604.41 286.70L605.38 286.64L606.35 286.47L607.32 286.19L608.30 285.80L609.27 285.31L610.24 284.72L611.22 284.04L612.19 283.27L613.16 282.43L614.14 281.53L615.11 280.56L616.08 279.56L617.05 278.52L618.03 277.45L619.00 276.37L619.97 275.30L620.95 274.23L621.92 273.19L622.89 272.19L623.87 271.23L624.84 270.32L625.81 269.49L626.78 268.73L627.76 268.05L628.73 267.47L629.70 266.98L630.68 266.60L631.65 266.32L632.62 266.15L633.60 266.10L634.57 266.16L635.54 266.33L636.51 266.61L637.49 267.00L638.46 267.49L639.43 268.08L640.41 268.76L641.38 269.53L642.35 270.37L643.33 271.27L644.30 272.24L645.27 273.24L646.24 274.28L647.22 275.35L648.19 276.43L649.16 277.50L650.14 278.57L651.11 279.61L652.08 280.61L653.06 281.57L654.03 282.48L655.00 283.31L655.97 284.07L656.95 284.75L657.92 285.33L658.89 285.82L659.87 286.20L660.84 286.48L661.81 286.65L662.79 286.70L663.76 286.64L664.73 286.47L665.70 286.19L666.68 285.80L667.65 285.31L668.62 284.72L669.60 284.04L670.57 283.27L671.54 282.43L672.52 281.53L673.49 280.56L674.46 279.56L675.43 278.52L676.41 277.45L677.38 276.37L678.35 275.30L679.33 274.23L680.30 273.19L681.27 272.19L682.25 271.23L683.22 270.32L684.19 269.49L685.16 268.73L686.14 268.05L687.11 267.47L688.08 266.98L689.06 266.60L690.03 266.32L691.00 266.15L691.98 266.10L692.95 266.16L693.92 266.33L694.89 266.61L695.87 267.00L696.84 267.49L697.81 268.08L698.79 268.76L699.76 269.53L700.73 270.37L701.71 271.27L702.68 272.24L703.65 273.24L704.62 274.28L705.60 275.35L706.57 276.43L707.54 277.50L708.52 278.57L709.49 279.61L710.46 280.61L711.44 281.57L712.41 282.48L713.38 283.31L714.35 284.07L715.33 284.75L716.30 285.33" fill="none" stroke="#e01818" stroke-width="1"/><path d="M68 265.40H125.2L132.50 276.40L125.2 287.40H68" fill="#000" stroke="#c81414" stroke-width=".8"/><text x="71.30" y="277.04" font-size="4" fill="#e01818" stroke="#e01818" stroke-width="0.18">6</text><text x="77.00" y="269.58" font-size="4.4" fill="#e8e8e8" stroke="#e8e8e8" stroke-width="0.08">L0-Ic</text><text x="77.00" y="274.98" font-size="4.4" fill="#e8e8e8" stroke="#e8e8e8" stroke-width="0.08">幅值:4.9928kA</text><text x="77.00" y="280.38" font-size="4.4" fill="#e8e8e8" stroke="#e8e8e8" stroke-width="0.08">相位:-119.8510°</text><text x="77.00" y="285.78" font-size="4.4" fill="#e8e8e8" stroke="#e8e8e8" stroke-width="0.08">频率:50.0034Hz</text><rect x="114.7" y="267.60" width="5.6" height="5.2" rx="1" fill="none" stroke="#c81414" stroke-width=".7"/><text x="114.40" y="278.91" font-size="4.2" fill="#e01818" stroke="#e01818" stroke-width="0.18">L0-Ic</text><path d="M716.30 276.40L719.4 273.10H742.4Q743.2 273.10 743.2 273.90V278.90Q743.2 279.70 742.4 279.70H719.4Z" fill="#000" stroke="#c81414" stroke-width=".8"/><text x="731.00" y="277.73" font-size="3.7" fill="#f4f4f4" stroke="#f4f4f4" stroke-width="0.18" text-anchor="middle">0.000kA</text><path d="M132.50 312.60H716.30" stroke="#484848" stroke-width="1"/><path d="M132.50 312.60H716.30" stroke="#cfcf00" stroke-width=".8" stroke-dasharray="1.4 1" opacity=".8"/><path d="M132.50 312.58L133.47 311.50L134.45 310.44L135.42 309.40L136.39 308.39L137.37 307.43L138.34 306.53L139.31 305.69L140.28 304.93L141.26 304.25L142.23 303.67L143.20 303.18L144.18 302.80L145.15 302.52L146.12 302.35L147.09 302.30L148.07 302.36L149.04 302.53L150.01 302.81L150.99 303.20L151.96 303.69L152.93 304.28L153.91 304.96L154.88 305.72L155.85 306.56L156.82 307.47L157.80 308.43L158.77 309.44L159.74 310.48L160.72 311.54L161.69 312.62L162.66 313.70L163.64 314.76L164.61 315.80L165.58 316.81L166.56 317.77L167.53 318.67L168.50 319.51L169.47 320.27L170.45 320.95L171.42 321.53L172.39 322.02L173.37 322.40L174.34 322.68L175.31 322.85L176.28 322.90L177.26 322.84L178.23 322.67L179.20 322.39L180.18 322.00L181.15 321.51L182.12 320.92L183.10 320.24L184.07 319.48L185.04 318.64L186.02 317.73L186.99 316.77L187.96 315.76L188.93 314.72L189.91 313.66L190.88 312.58L191.85 311.50L192.83 310.44L193.80 309.40L194.77 308.39L195.75 307.43L196.72 306.53L197.69 305.69L198.66 304.93L199.64 304.25L200.61 303.67L201.58 303.18L202.56 302.80L203.53 302.52L204.50 302.35L205.48 302.30L206.45 302.36L207.42 302.53L208.39 302.81L209.37 303.20L210.34 303.69L211.31 304.28L212.29 304.96L213.26 305.72L214.23 306.56L215.21 307.47L216.18 308.43L217.15 309.44L218.12 310.48L219.10 311.54L220.07 312.62L221.04 313.70L222.02 314.76L222.99 315.80L223.96 316.81L224.94 317.77L225.91 318.67L226.88 319.51L227.85 320.27L228.83 320.95L229.80 321.53L230.77 322.02L231.75 322.40L232.72 322.68L233.69 322.85L234.67 322.90L235.64 322.84L236.61 322.67L237.58 322.39L238.56 322.00L239.53 321.51L240.50 320.92L241.48 320.24L242.45 319.48L243.42 318.64L244.40 317.73L245.37 316.77L246.34 315.76L247.31 314.72L248.29 313.66L249.26 312.58L250.23 311.50L251.21 310.44L252.18 309.40L253.15 308.39L254.13 307.43L255.10 306.53L256.07 305.69L257.04 304.93L258.02 304.25L258.99 303.67L259.96 303.18L260.94 302.80L261.91 302.52L262.88 302.35L263.86 302.30L264.83 302.36L265.80 302.53L266.77 302.81L267.75 303.20L268.72 303.69L269.69 304.28L270.67 304.96L271.64 305.72L272.61 306.56L273.59 307.47L274.56 308.43L275.53 309.44L276.50 310.48L277.48 311.54L278.45 312.62L279.42 313.70L280.40 314.76L281.37 315.80L282.34 316.81L283.32 317.77L284.29 318.67L285.26 319.51L286.23 320.27L287.21 320.95L288.18 321.53L289.15 322.02L290.13 322.40L291.10 322.68L292.07 322.85L293.05 322.90L294.02 322.84L294.99 322.67L295.96 322.39L296.94 322.00L297.91 321.51L298.88 320.92L299.86 320.24L300.83 319.48L301.80 318.64L302.78 317.73L303.75 316.77L304.72 315.76L305.69 314.72L306.67 313.66L307.64 312.58L308.61 311.50L309.59 310.44L310.56 309.40L311.53 308.39L312.50 307.43L313.48 306.53L314.45 305.69L315.42 304.93L316.40 304.25L317.37 303.67L318.34 303.18L319.32 302.80L320.29 302.52L321.26 302.35L322.24 302.30L323.21 302.36L324.18 302.53L325.15 302.81L326.13 303.20L327.10 303.69L328.07 304.28L329.05 304.96L330.02 305.72L330.99 306.56L331.97 307.47L332.94 308.43L333.91 309.44L334.88 310.48L335.86 311.54L336.83 312.62L337.80 313.70L338.78 314.76L339.75 315.80L340.72 316.81L341.70 317.77L342.67 318.67L343.64 319.51L344.61 320.27L345.59 320.95L346.56 321.53L347.53 322.02L348.51 322.40L349.48 322.68L350.45 322.85L351.43 322.90L352.40 322.84L353.37 322.67L354.34 322.39L355.32 322.00L356.29 321.51L357.26 320.92L358.24 320.24L359.21 319.48L360.18 318.64L361.16 317.73L362.13 316.77L363.10 315.76L364.07 314.72L365.05 313.66L366.02 312.58L366.99 311.50L367.97 310.44L368.94 309.40L369.91 308.39L370.89 307.43L371.86 306.53L372.83 305.69L373.80 304.93L374.78 304.25L375.75 303.67L376.72 303.18L377.70 302.80L378.67 302.52L379.64 302.35L380.62 302.30L381.59 302.36L382.56 302.53L383.53 302.81L384.51 303.20L385.48 303.69L386.45 304.28L387.43 304.96L388.40 305.72L389.37 306.56L390.35 307.47L391.32 308.43L392.29 309.44L393.26 310.48L394.24 311.54L395.21 312.62L396.18 313.70L397.16 314.76L398.13 315.80L399.10 316.81L400.08 317.77L401.05 318.67L402.02 319.51L402.99 320.27L403.97 320.95L404.94 321.53L405.91 322.02L406.89 322.40L407.86 322.68L408.83 322.85L409.81 322.90L410.78 322.84L411.75 322.67L412.72 322.39L413.70 322.00L414.67 321.51L415.64 320.92L416.62 320.24L417.59 319.48L418.56 318.64L419.54 317.73L420.51 316.77L421.48 315.76L422.45 314.72L423.43 313.66L424.40 312.58L425.37 311.50L426.35 310.44L427.32 309.40L428.29 308.39L429.27 307.43L430.24 306.53L431.21 305.69L432.18 304.93L433.16 304.25L434.13 303.67L435.10 303.18L436.08 302.80L437.05 302.52L438.02 302.35L439.00 302.30L439.97 302.36L440.94 302.53L441.91 302.81L442.89 303.20L443.86 303.69L444.83 304.28L445.81 304.96L446.78 305.72L447.75 306.56L448.73 307.47L449.70 308.43L450.67 309.44L451.64 310.48L452.62 311.54L453.59 312.62L454.56 313.70L455.54 314.76L456.51 315.80L457.48 316.81L458.46 317.77L459.43 318.67L460.40 319.51L461.37 320.27L462.35 320.95L463.32 321.53L464.29 322.02L465.27 322.40L466.24 322.68L467.21 322.85L468.19 322.90L469.16 322.84L470.13 322.67L471.10 322.39L472.08 322.00L473.05 321.51L474.02 320.92L475.00 320.24L475.97 319.48L476.94 318.64L477.92 317.73L478.89 316.77L479.86 315.76L480.83 314.72L481.81 313.66L482.78 312.58L483.75 311.50L484.73 310.44L485.70 309.40L486.67 308.39L487.65 307.43L488.62 306.53L489.59 305.69L490.56 304.93L491.54 304.25L492.51 303.67L493.48 303.18L494.46 302.80L495.43 302.52L496.40 302.35L497.38 302.30L498.35 302.36L499.32 302.53L500.29 302.81L501.27 303.20L502.24 303.69L503.21 304.28L504.19 304.96L505.16 305.72L506.13 306.56L507.11 307.47L508.08 308.43L509.05 309.44L510.02 310.48L511.00 311.54L511.97 312.62L512.94 313.70L513.92 314.76L514.89 315.80L515.86 316.81L516.84 317.77L517.81 318.67L518.78 319.51L519.75 320.27L520.73 320.95L521.70 321.53L522.67 322.02L523.65 322.40L524.62 322.68L525.59 322.85L526.57 322.90L527.54 322.84L528.51 322.67L529.48 322.39L530.46 322.00L531.43 321.51L532.40 320.92L533.38 320.24L534.35 319.48L535.32 318.64L536.30 317.73L537.27 316.77L538.24 315.76L539.21 314.72L540.19 313.66L541.16 312.58L542.13 311.50L543.11 310.44L544.08 309.40L545.05 308.39L546.03 307.43L547.00 306.53L547.97 305.69L548.94 304.93L549.92 304.25L550.89 303.67L551.86 303.18L552.84 302.80L553.81 302.52L554.78 302.35L555.76 302.30L556.73 302.36L557.70 302.53L558.67 302.81L559.65 303.20L560.62 303.69L561.59 304.28L562.57 304.96L563.54 305.72L564.51 306.56L565.49 307.47L566.46 308.43L567.43 309.44L568.40 310.48L569.38 311.54L570.35 312.62L571.32 313.70L572.30 314.76L573.27 315.80L574.24 316.81L575.22 317.77L576.19 318.67L577.16 319.51L578.13 320.27L579.11 320.95L580.08 321.53L581.05 322.02L582.03 322.40L583.00 322.68L583.97 322.85L584.95 322.90L585.92 322.84L586.89 322.67L587.86 322.39L588.84 322.00L589.81 321.51L590.78 320.92L591.76 320.24L592.73 319.48L593.70 318.64L594.68 317.73L595.65 316.77L596.62 315.76L597.59 314.72L598.57 313.66L599.54 312.58L600.51 311.50L601.49 310.44L602.46 309.40L603.43 308.39L604.41 307.43L605.38 306.53L606.35 305.69L607.32 304.93L608.30 304.25L609.27 303.67L610.24 303.18L611.22 302.80L612.19 302.52L613.16 302.35L614.14 302.30L615.11 302.36L616.08 302.53L617.05 302.81L618.03 303.20L619.00 303.69L619.97 304.28L620.95 304.96L621.92 305.72L622.89 306.56L623.87 307.47L624.84 308.43L625.81 309.44L626.78 310.48L627.76 311.54L628.73 312.62L629.70 313.70L630.68 314.76L631.65 315.80L632.62 316.81L633.60 317.77L634.57 318.67L635.54 319.51L636.51 320.27L637.49 320.95L638.46 321.53L639.43 322.02L640.41 322.40L641.38 322.68L642.35 322.85L643.33 322.90L644.30 322.84L645.27 322.67L646.24 322.39L647.22 322.00L648.19 321.51L649.16 320.92L650.14 320.24L651.11 319.48L652.08 318.64L653.06 317.73L654.03 316.77L655.00 315.76L655.97 314.72L656.95 313.66L657.92 312.58L658.89 311.50L659.87 310.44L660.84 309.40L661.81 308.39L662.79 307.43L663.76 306.53L664.73 305.69L665.70 304.93L666.68 304.25L667.65 303.67L668.62 303.18L669.60 302.80L670.57 302.52L671.54 302.35L672.52 302.30L673.49 302.36L674.46 302.53L675.43 302.81L676.41 303.20L677.38 303.69L678.35 304.28L679.33 304.96L680.30 305.72L681.27 306.56L682.25 307.47L683.22 308.43L684.19 309.44L685.16 310.48L686.14 311.54L687.11 312.62L688.08 313.70L689.06 314.76L690.03 315.80L691.00 316.81L691.98 317.77L692.95 318.67L693.92 319.51L694.89 320.27L695.87 320.95L696.84 321.53L697.81 322.02L698.79 322.40L699.76 322.68L700.73 322.85L701.71 322.90L702.68 322.84L703.65 322.67L704.62 322.39L705.60 322.00L706.57 321.51L707.54 320.92L708.52 320.24L709.49 319.48L710.46 318.64L711.44 317.73L712.41 316.77L713.38 315.76L714.35 314.72L715.33 313.66L716.30 312.58" fill="none" stroke="#cfcf00" stroke-width="1"/><path d="M68 301.60H125.2L132.50 312.60L125.2 323.60H68" fill="#000" stroke="#b9b900" stroke-width=".8"/><text x="71.30" y="313.24" font-size="4" fill="#cfcf00" stroke="#cfcf00" stroke-width="0.18">7</text><text x="77.00" y="305.78" font-size="4.4" fill="#e8e8e8" stroke="#e8e8e8" stroke-width="0.08">L1-Ua</text><text x="77.00" y="311.18" font-size="4.4" fill="#e8e8e8" stroke="#e8e8e8" stroke-width="0.08">幅值:100.0355kV</text><text x="77.00" y="316.58" font-size="4.4" fill="#e8e8e8" stroke="#e8e8e8" stroke-width="0.08">相位:0.1223°</text><text x="77.00" y="321.98" font-size="4.4" fill="#e8e8e8" stroke="#e8e8e8" stroke-width="0.08">频率:50.0023Hz</text><rect x="114.7" y="303.80" width="5.6" height="5.2" rx="1" fill="none" stroke="#b9b900" stroke-width=".7"/><text x="114.40" y="315.11" font-size="4.2" fill="#cfcf00" stroke="#cfcf00" stroke-width="0.18">L1-Ua</text><path d="M716.30 312.60L719.4 309.30H742.4Q743.2 309.30 743.2 310.10V315.10Q743.2 315.90 742.4 315.90H719.4Z" fill="#000" stroke="#b9b900" stroke-width=".8"/><text x="731.00" y="313.93" font-size="3.7" fill="#f4f4f4" stroke="#f4f4f4" stroke-width="0.18" text-anchor="middle">0.000kV</text><path d="M132.50 348.80H716.30" stroke="#484848" stroke-width="1"/><path d="M132.50 348.80H716.30" stroke="#cfcf00" stroke-width=".8" stroke-dasharray="1.4 1" opacity=".8"/><path d="M132.50 348.73L133.47 347.65L134.45 346.59L135.42 345.55L136.39 344.54L137.37 343.59L138.34 342.69L139.31 341.85L140.28 341.10L141.26 340.42L142.23 339.84L143.20 339.36L144.18 338.98L145.15 338.71L146.12 338.55L147.09 338.50L148.07 338.56L149.04 338.74L150.01 339.03L150.99 339.42L151.96 339.92L152.93 340.51L153.91 341.20L154.88 341.96L155.85 342.81L156.82 343.71L157.80 344.68L158.77 345.69L159.74 346.73L160.72 347.80L161.69 348.87L162.66 349.95L163.64 351.01L164.61 352.05L165.58 353.06L166.56 354.01L167.53 354.91L168.50 355.75L169.47 356.50L170.45 357.18L171.42 357.76L172.39 358.24L173.37 358.62L174.34 358.89L175.31 359.05L176.28 359.10L177.26 359.04L178.23 358.86L179.20 358.57L180.18 358.18L181.15 357.68L182.12 357.09L183.10 356.40L184.07 355.64L185.04 354.79L186.02 353.89L186.99 352.92L187.96 351.91L188.93 350.87L189.91 349.80L190.88 348.73L191.85 347.65L192.83 346.59L193.80 345.55L194.77 344.54L195.75 343.59L196.72 342.69L197.69 341.85L198.66 341.10L199.64 340.42L200.61 339.84L201.58 339.36L202.56 338.98L203.53 338.71L204.50 338.55L205.48 338.50L206.45 338.56L207.42 338.74L208.39 339.03L209.37 339.42L210.34 339.92L211.31 340.51L212.29 341.20L213.26 341.96L214.23 342.81L215.21 343.71L216.18 344.68L217.15 345.69L218.12 346.73L219.10 347.80L220.07 348.87L221.04 349.95L222.02 351.01L222.99 352.05L223.96 353.06L224.94 354.01L225.91 354.91L226.88 355.75L227.85 356.50L228.83 357.18L229.80 357.76L230.77 358.24L231.75 358.62L232.72 358.89L233.69 359.05L234.67 359.10L235.64 359.04L236.61 358.86L237.58 358.57L238.56 358.18L239.53 357.68L240.50 357.09L241.48 356.40L242.45 355.64L243.42 354.79L244.40 353.89L245.37 352.92L246.34 351.91L247.31 350.87L248.29 349.80L249.26 348.73L250.23 347.65L251.21 346.59L252.18 345.55L253.15 344.54L254.13 343.59L255.10 342.69L256.07 341.85L257.04 341.10L258.02 340.42L258.99 339.84L259.96 339.36L260.94 338.98L261.91 338.71L262.88 338.55L263.86 338.50L264.83 338.56L265.80 338.74L266.77 339.03L267.75 339.42L268.72 339.92L269.69 340.51L270.67 341.20L271.64 341.96L272.61 342.81L273.59 343.71L274.56 344.68L275.53 345.69L276.50 346.73L277.48 347.80L278.45 348.87L279.42 349.95L280.40 351.01L281.37 352.05L282.34 353.06L283.32 354.01L284.29 354.91L285.26 355.75L286.23 356.50L287.21 357.18L288.18 357.76L289.15 358.24L290.13 358.62L291.10 358.89L292.07 359.05L293.05 359.10L294.02 359.04L294.99 358.86L295.96 358.57L296.94 358.18L297.91 357.68L298.88 357.09L299.86 356.40L300.83 355.64L301.80 354.79L302.78 353.89L303.75 352.92L304.72 351.91L305.69 350.87L306.67 349.80L307.64 348.73L308.61 347.65L309.59 346.59L310.56 345.55L311.53 344.54L312.50 343.59L313.48 342.69L314.45 341.85L315.42 341.10L316.40 340.42L317.37 339.84L318.34 339.36L319.32 338.98L320.29 338.71L321.26 338.55L322.24 338.50L323.21 338.56L324.18 338.74L325.15 339.03L326.13 339.42L327.10 339.92L328.07 340.51L329.05 341.20L330.02 341.96L330.99 342.81L331.97 343.71L332.94 344.68L333.91 345.69L334.88 346.73L335.86 347.80L336.83 348.87L337.80 349.95L338.78 351.01L339.75 352.05L340.72 353.06L341.70 354.01L342.67 354.91L343.64 355.75L344.61 356.50L345.59 357.18L346.56 357.76L347.53 358.24L348.51 358.62L349.48 358.89L350.45 359.05L351.43 359.10L352.40 359.04L353.37 358.86L354.34 358.57L355.32 358.18L356.29 357.68L357.26 357.09L358.24 356.40L359.21 355.64L360.18 354.79L361.16 353.89L362.13 352.92L363.10 351.91L364.07 350.87L365.05 349.80L366.02 348.73L366.99 347.65L367.97 346.59L368.94 345.55L369.91 344.54L370.89 343.59L371.86 342.69L372.83 341.85L373.80 341.10L374.78 340.42L375.75 339.84L376.72 339.36L377.70 338.98L378.67 338.71L379.64 338.55L380.62 338.50L381.59 338.56L382.56 338.74L383.53 339.03L384.51 339.42L385.48 339.92L386.45 340.51L387.43 341.20L388.40 341.96L389.37 342.81L390.35 343.71L391.32 344.68L392.29 345.69L393.26 346.73L394.24 347.80L395.21 348.87L396.18 349.95L397.16 351.01L398.13 352.05L399.10 353.06L400.08 354.01L401.05 354.91L402.02 355.75L402.99 356.50L403.97 357.18L404.94 357.76L405.91 358.24L406.89 358.62L407.86 358.89L408.83 359.05L409.81 359.10L410.78 359.04L411.75 358.86L412.72 358.57L413.70 358.18L414.67 357.68L415.64 357.09L416.62 356.40L417.59 355.64L418.56 354.79L419.54 353.89L420.51 352.92L421.48 351.91L422.45 350.87L423.43 349.80L424.40 348.73L425.37 347.65L426.35 346.59L427.32 345.55L428.29 344.54L429.27 343.59L430.24 342.69L431.21 341.85L432.18 341.10L433.16 340.42L434.13 339.84L435.10 339.36L436.08 338.98L437.05 338.71L438.02 338.55L439.00 338.50L439.97 338.56L440.94 338.74L441.91 339.03L442.89 339.42L443.86 339.92L444.83 340.51L445.81 341.20L446.78 341.96L447.75 342.81L448.73 343.71L449.70 344.68L450.67 345.69L451.64 346.73L452.62 347.80L453.59 348.87L454.56 349.95L455.54 351.01L456.51 352.05L457.48 353.06L458.46 354.01L459.43 354.91L460.40 355.75L461.37 356.50L462.35 357.18L463.32 357.76L464.29 358.24L465.27 358.62L466.24 358.89L467.21 359.05L468.19 359.10L469.16 359.04L470.13 358.86L471.10 358.57L472.08 358.18L473.05 357.68L474.02 357.09L475.00 356.40L475.97 355.64L476.94 354.79L477.92 353.89L478.89 352.92L479.86 351.91L480.83 350.87L481.81 349.80L482.78 348.73L483.75 347.65L484.73 346.59L485.70 345.55L486.67 344.54L487.65 343.59L488.62 342.69L489.59 341.85L490.56 341.10L491.54 340.42L492.51 339.84L493.48 339.36L494.46 338.98L495.43 338.71L496.40 338.55L497.38 338.50L498.35 338.56L499.32 338.74L500.29 339.03L501.27 339.42L502.24 339.92L503.21 340.51L504.19 341.20L505.16 341.96L506.13 342.81L507.11 343.71L508.08 344.68L509.05 345.69L510.02 346.73L511.00 347.80L511.97 348.87L512.94 349.95L513.92 351.01L514.89 352.05L515.86 353.06L516.84 354.01L517.81 354.91L518.78 355.75L519.75 356.50L520.73 357.18L521.70 357.76L522.67 358.24L523.65 358.62L524.62 358.89L525.59 359.05L526.57 359.10L527.54 359.04L528.51 358.86L529.48 358.57L530.46 358.18L531.43 357.68L532.40 357.09L533.38 356.40L534.35 355.64L535.32 354.79L536.30 353.89L537.27 352.92L538.24 351.91L539.21 350.87L540.19 349.80L541.16 348.73L542.13 347.65L543.11 346.59L544.08 345.55L545.05 344.54L546.03 343.59L547.00 342.69L547.97 341.85L548.94 341.10L549.92 340.42L550.89 339.84L551.86 339.36L552.84 338.98L553.81 338.71L554.78 338.55L555.76 338.50L556.73 338.56L557.70 338.74L558.67 339.03L559.65 339.42L560.62 339.92L561.59 340.51L562.57 341.20L563.54 341.96L564.51 342.81L565.49 343.71L566.46 344.68L567.43 345.69L568.40 346.73L569.38 347.80L570.35 348.87L571.32 349.95L572.30 351.01L573.27 352.05L574.24 353.06L575.22 354.01L576.19 354.91L577.16 355.75L578.13 356.50L579.11 357.18L580.08 357.76L581.05 358.24L582.03 358.62L583.00 358.89L583.97 359.05L584.95 359.10L585.92 359.04L586.89 358.86L587.86 358.57L588.84 358.18L589.81 357.68L590.78 357.09L591.76 356.40L592.73 355.64L593.70 354.79L594.68 353.89L595.65 352.92L596.62 351.91L597.59 350.87L598.57 349.80L599.54 348.73L600.51 347.65L601.49 346.59L602.46 345.55L603.43 344.54L604.41 343.59L605.38 342.69L606.35 341.85L607.32 341.10L608.30 340.42L609.27 339.84L610.24 339.36L611.22 338.98L612.19 338.71L613.16 338.55L614.14 338.50L615.11 338.56L616.08 338.74L617.05 339.03L618.03 339.42L619.00 339.92L619.97 340.51L620.95 341.20L621.92 341.96L622.89 342.81L623.87 343.71L624.84 344.68L625.81 345.69L626.78 346.73L627.76 347.80L628.73 348.87L629.70 349.95L630.68 351.01L631.65 352.05L632.62 353.06L633.60 354.01L634.57 354.91L635.54 355.75L636.51 356.50L637.49 357.18L638.46 357.76L639.43 358.24L640.41 358.62L641.38 358.89L642.35 359.05L643.33 359.10L644.30 359.04L645.27 358.86L646.24 358.57L647.22 358.18L648.19 357.68L649.16 357.09L650.14 356.40L651.11 355.64L652.08 354.79L653.06 353.89L654.03 352.92L655.00 351.91L655.97 350.87L656.95 349.80L657.92 348.73L658.89 347.65L659.87 346.59L660.84 345.55L661.81 344.54L662.79 343.59L663.76 342.69L664.73 341.85L665.70 341.10L666.68 340.42L667.65 339.84L668.62 339.36L669.60 338.98L670.57 338.71L671.54 338.55L672.52 338.50L673.49 338.56L674.46 338.74L675.43 339.03L676.41 339.42L677.38 339.92L678.35 340.51L679.33 341.20L680.30 341.96L681.27 342.81L682.25 343.71L683.22 344.68L684.19 345.69L685.16 346.73L686.14 347.80L687.11 348.87L688.08 349.95L689.06 351.01L690.03 352.05L691.00 353.06L691.98 354.01L692.95 354.91L693.92 355.75L694.89 356.50L695.87 357.18L696.84 357.76L697.81 358.24L698.79 358.62L699.76 358.89L700.73 359.05L701.71 359.10L702.68 359.04L703.65 358.86L704.62 358.57L705.60 358.18L706.57 357.68L707.54 357.09L708.52 356.40L709.49 355.64L710.46 354.79L711.44 353.89L712.41 352.92L713.38 351.91L714.35 350.87L715.33 349.80L716.30 348.73" fill="none" stroke="#cfcf00" stroke-width="1"/><path d="M68 337.80H125.2L132.50 348.80L125.2 359.80H68" fill="#000" stroke="#b9b900" stroke-width=".8"/><text x="71.30" y="349.44" font-size="4" fill="#cfcf00" stroke="#cfcf00" stroke-width="0.18">8</text><text x="77.00" y="341.98" font-size="4.4" fill="#e8e8e8" stroke="#e8e8e8" stroke-width="0.08">L1-Ia</text><text x="77.00" y="347.38" font-size="4.4" fill="#e8e8e8" stroke="#e8e8e8" stroke-width="0.08">幅值:4.9944kA</text><text x="77.00" y="352.78" font-size="4.4" fill="#e8e8e8" stroke="#e8e8e8" stroke-width="0.08">相位:0.4071°</text><text x="77.00" y="358.18" font-size="4.4" fill="#e8e8e8" stroke="#e8e8e8" stroke-width="0.08">频率:49.9969Hz</text><rect x="114.7" y="340.00" width="5.6" height="5.2" rx="1" fill="none" stroke="#b9b900" stroke-width=".7"/><text x="114.40" y="351.31" font-size="4.2" fill="#cfcf00" stroke="#cfcf00" stroke-width="0.18">L1-Ia</text><path d="M716.30 348.80L719.4 345.50H742.4Q743.2 345.50 743.2 346.30V351.30Q743.2 352.10 742.4 352.10H719.4Z" fill="#000" stroke="#b9b900" stroke-width=".8"/><text x="731.00" y="350.13" font-size="3.7" fill="#f4f4f4" stroke="#f4f4f4" stroke-width="0.18" text-anchor="middle">0.000kA</text></g><path d="M132.50 82V365M716.30 82V365" stroke="#f0f0f0" stroke-width=".7"/><path d="M131.30 82h2.4l-1.2 1.8zM715.10 82h2.4l-1.2 1.8z" fill="#f0f0f0"/><path d="M69 364.6H744" stroke="#3a3a3a" stroke-width=".6"/></svg>
<div class="a zb" style="left:69.8px;width:18.8px"><svg class="a" style="left:0.9px;top:2.6px" width="6.4" height="6.4" viewBox="0 0 6.4 6.4"><circle cx="2.6" cy="2.4" r="1.7" fill="#dff0fd" stroke="#3a9fe8" stroke-width=".8"/><path d="M3.9 3.8L5.6 5.6" stroke="#f2a93b" stroke-width="1.1" stroke-linecap="round"/></svg></div>
<div class="a zb" style="left:90.1px;width:18.9px"><svg class="a" style="left:0.9px;top:2.6px" width="6.4" height="6.4" viewBox="0 0 6.4 6.4"><circle cx="2.6" cy="2.4" r="1.7" fill="#dff0fd" stroke="#3a9fe8" stroke-width=".8"/><path d="M3.9 3.8L5.6 5.6" stroke="#f2a93b" stroke-width="1.1" stroke-linecap="round"/></svg></div>
<div class="a bbtn" style="left:66.8px;width:46.6px"><svg class="a" style="left:0px;top:2px" width="6.4" height="6" viewBox="0 0 6.4 6"><rect x=".3" y="3.6" width="1.2" height="2.2" fill="#39a0ea"/><rect x="2" y="2.2" width="1.2" height="3.6" fill="#ef4a4a"/><rect x="3.7" y="1.2" width="1.2" height="4.6" fill="#c768e8"/><rect x="5.2" y=".2" width="1.1" height="5.6" fill="#b080f0"/></svg></div>
<div class="a bbtn" style="left:117px;width:56.4px"><svg class="a" style="left:0.9px;top:1.8px" width="5" height="7" viewBox="0 0 5 7"><circle cx="2.5" cy="2.5" r="2" fill="#ffc61a"/><rect x="1.7" y="4.3" width="1.6" height="1.8" fill="#f0a818"/></svg></div>
<div class="a bbtn" style="left:176.7px;width:54.3px"><svg class="a" style="left:1.2px;top:2px" width="6" height="6" viewBox="0 0 6 6"><path d="M.4 .4V5.6H5.6" stroke="#e85a5a" stroke-width=".5" fill="none"/><rect x="1.2" y="3" width="1" height="2.3" fill="#f05050"/><rect x="2.5" y="2" width="1" height="3.3" fill="#ffc020"/><rect x="3.8" y="3.4" width="1" height="1.9" fill="#40a8f0"/></svg></div>
<div class="a bbtn" style="left:233.8px;width:37.5px"><svg class="a" style="left:1.4px;top:2.6px" width="5" height="5" viewBox="0 0 5 5"><path d="M.3 3.6Q1.4 3.6 2.3 1.6Q2.6 1 3 1.8Q3.6 3.4 4.7 3.6" stroke="#3a9fe8" stroke-width=".9" fill="none"/></svg></div>
<div class="a bbtn" style="left:274.8px;width:26.3px"><svg class="a" style="left:2.2px;top:1.8px" width="6" height="6.4" viewBox="0 0 6 6.4"><circle cx="1.6" cy="3.2" r="1.5" fill="#f03838"/><circle cx="3.9" cy="1.7" r="1.4" fill="#30c040"/><circle cx="3.9" cy="4.7" r="1.4" fill="#2c8ff0"/></svg></div>
<div class="a bbtn" style="left:303.8px;width:38.4px"><svg class="a" style="left:1.2px;top:1.6px" width="6" height="7" viewBox="0 0 6 7"><rect x="1.8" y=".3" width="2.4" height="2.4" rx=".4" fill="#2c8ff0"/><rect x=".2" y="3.3" width="2.6" height="2.8" rx=".4" fill="#f5a623"/><rect x="3.2" y="3.3" width="2.6" height="2.8" rx=".4" fill="#30c040"/></svg></div>
<svg class="ov" width="810" height="440" viewBox="0 0 810 440" font-family='"Liberation Sans","Noto Sans CJK SC",sans-serif'><text x="72.00" y="39.78" font-size="4.4" fill="#9c9c9c" stroke="#9c9c9c" stroke-width="0.18">电力录波实时监视分析及电能质量分析工具</text><text x="83.00" y="53.43" font-size="4.8" fill="#222" stroke="#222" stroke-width="0.18">起始页</text><text x="130.00" y="53.43" font-size="4.8" fill="#2b97e5" stroke="#2b97e5" stroke-width="0.18">实时监控</text><text x="82.20" y="77.06" font-size="4.6" fill="#1a1a1a" stroke="#1a1a1a" stroke-width="0.18" text-anchor="middle">开始监控</text><text x="110.70" y="77.06" font-size="4.6" fill="#9a9a9a" stroke="#9a9a9a" stroke-width="0.18" text-anchor="middle">开始录波</text><text x="139.30" y="77.06" font-size="4.6" fill="#1a1a1a" stroke="#1a1a1a" stroke-width="0.18" text-anchor="middle">通讯设置</text><text x="167.90" y="77.06" font-size="4.6" fill="#1a1a1a" stroke="#1a1a1a" stroke-width="0.18" text-anchor="middle">重置设备</text><text x="196.30" y="77.06" font-size="4.6" fill="#1a1a1a" stroke="#1a1a1a" stroke-width="0.18" text-anchor="middle">触发录波</text><text x="190.88" y="370.49" font-size="4.7" fill="#f2f2f2" stroke="#f2f2f2" stroke-width="0.06" text-anchor="middle">+20.000</text><text x="249.26" y="370.49" font-size="4.7" fill="#f2f2f2" stroke="#f2f2f2" stroke-width="0.06" text-anchor="middle">+40.000</text><text x="307.64" y="370.49" font-size="4.7" fill="#f2f2f2" stroke="#f2f2f2" stroke-width="0.06" text-anchor="middle">+60.000</text><text x="366.02" y="370.49" font-size="4.7" fill="#f2f2f2" stroke="#f2f2f2" stroke-width="0.06" text-anchor="middle">+80.000</text><text x="424.40" y="370.49" font-size="4.7" fill="#f2f2f2" stroke="#f2f2f2" stroke-width="0.06" text-anchor="middle">+100.000</text><text x="482.78" y="370.49" font-size="4.7" fill="#f2f2f2" stroke="#f2f2f2" stroke-width="0.06" text-anchor="middle">+120.000</text><text x="541.16" y="370.49" font-size="4.7" fill="#f2f2f2" stroke="#f2f2f2" stroke-width="0.06" text-anchor="middle">+140.000</text><text x="599.54" y="370.49" font-size="4.7" fill="#f2f2f2" stroke="#f2f2f2" stroke-width="0.06" text-anchor="middle">+160.000</text><text x="657.92" y="370.49" font-size="4.7" fill="#f2f2f2" stroke="#f2f2f2" stroke-width="0.06" text-anchor="middle">+180.000</text><text x="716.30" y="370.49" font-size="4.7" fill="#f2f2f2" stroke="#f2f2f2" stroke-width="0.06" text-anchor="middle">+200.000</text><text x="127.00" y="370.49" font-size="4.7" fill="#f2f2f2" stroke="#f2f2f2" stroke-width="0.06" text-anchor="middle">9:04:20.304000</text><text x="127.30" y="376.89" font-size="4.7" fill="#f2f2f2" stroke="#f2f2f2" stroke-width="0.06" text-anchor="middle">2025/6/6</text><text x="424.00" y="377.75" font-size="4.3" fill="#f2f2f2" stroke="#f2f2f2" stroke-width="0.05" text-anchor="middle">Δt = 200.000 ms</text><text x="716.30" y="376.91" font-size="4.2" fill="#f2f2f2" stroke="#f2f2f2" stroke-width="0.05" text-anchor="middle">(t/ms)</text><text x="78.60" y="373.98" font-size="4.4" fill="#222" stroke="#222" stroke-width="0.18">放大</text><text x="98.90" y="373.98" font-size="4.4" fill="#222" stroke="#222" stroke-width="0.18">缩小</text><text x="75.10" y="392.96" font-size="4.6" fill="#222" stroke="#222" stroke-width="0.1" letter-spacing="0.1">三相三线制线分析</text><text x="125.20" y="392.96" font-size="4.6" fill="#222" stroke="#222" stroke-width="0.1" letter-spacing="0.1">功率、线损、电能计算</text><text x="186.90" y="392.96" font-size="4.6" fill="#222" stroke="#222" stroke-width="0.1" letter-spacing="0.1">次谐波、超谐波分析</text><text x="242.20" y="392.96" font-size="4.6" fill="#222" stroke="#222" stroke-width="0.1" letter-spacing="0.1">电压闪变分析</text><text x="285.00" y="392.96" font-size="4.6" fill="#222" stroke="#222" stroke-width="0.1" letter-spacing="0.1">矢量图</text><text x="313.10" y="392.96" font-size="4.6" fill="#222" stroke="#222" stroke-width="0.1" letter-spacing="0.1">序分量分析器</text></svg>
<div id="dlg" class="a"><div id="dtitle" class="a"></div></div>
<svg class="a" style="left:214.2px;top:64.4px" width="5.6" height="5.2" viewBox="0 0 5.6 5.2"><rect x=".3" y=".3" width="5" height="4.6" rx="1" fill="#fff" stroke="#c4c4c4" stroke-width=".6"/><rect x="1.1" y="2.1" width="3.4" height="1.6" rx=".4" fill="#ea4b55"/></svg>
<svg class="a" style="left:561.4px;top:64px" width="6" height="6" viewBox="0 0 6 6"><path d="M1.4 1.4l3.2 3.2M4.6 1.4l-3.2 3.2" stroke="#222" stroke-width=".6"/></svg>
<div class="a inp" style="left:243.6px;top:76.2px;width:62.8px;height:8.6px"><svg class="a" style="right:1.4px;top:2.6px" width="5.2" height="3.4" viewBox="0 0 5.2 3.4"><path d="M.5 .6L2.6 2.7L4.7 .6" fill="none" stroke="#1e96e6" stroke-width="1.3"/></svg></div>
<div class="a inp" style="left:337.2px;top:75.2px;width:62.4px;height:10.2px;border-bottom:0.9px solid #4aa3e6"><div class="a" style="right:1px;top:0.8px;width:5.8px;height:7.8px;background:#f6f6f6;border:.4px solid #e4e4e4;border-radius:1px"></div><svg class="a" style="right:1.9px;top:1.2px" width="4" height="7" viewBox="0 0 4 7"><path d="M.6 2.2L2 .7L3.4 2.2zM.6 4.8L2 6.3L3.4 4.8z" fill="#222"/></svg></div>
<div class="a" style="left:444.5px;top:75.2px;width:62.6px;height:9.6px;background:#e1e1e1;border:.5px solid #d4d4d4;border-radius:1px"></div>
<div class="a inp" style="left:243.6px;top:89.7px;width:62.8px;height:8.6px"></div>
<div class="a" style="left:308.8px;top:88.3px;width:26.4px;height:10.6px;background:#fdfdfd;border:.8px solid #8cc3ee;border-radius:2px"></div>
<div class="a" style="left:214.2px;top:102px;width:354.3px;height:115.6px;background:#fff;border:.6px solid #c9c9c9;overflow:hidden"></div>
<div class="a" style="left:0;top:0;width:810px;height:217.4px;overflow:hidden;clip-path:inset(102px 241.6px 0 214.4px)"><div class="hd" style="left:215px;width:28.5px"></div><div class="hd" style="left:244.5px;width:35.0px"></div><div class="hd" style="left:280.5px;width:28.0px"></div><div class="hd" style="left:309.5px;width:28.0px"></div><div class="hd" style="left:338.5px;width:27.5px"></div><div class="hd" style="left:367px;width:20.600000000000023px"></div><div class="hd" style="left:388.6px;width:28.399999999999977px"></div><div class="hd" style="left:418px;width:35px"></div><div class="hd" style="left:454px;width:28px"></div><div class="hd" style="left:483px;width:27.5px"></div><div class="hd" style="left:511.5px;width:27.5px"></div><div class="hd" style="left:540px;width:20.600000000000023px"></div><div class="cb on" style="left:377.3px;top:117.3px"><svg width="6" height="6" viewBox="0 0 6 6" style="display:block"><path d="M1.3 3.1L2.5 4.3L4.7 1.8" fill="none" stroke="#fff" stroke-width=".8"/></svg></div><div class="cb on" style="left:550.3px;top:117.3px"><svg width="6" height="6" viewBox="0 0 6 6" style="display:block"><path d="M1.3 3.1L2.5 4.3L4.7 1.8" fill="none" stroke="#fff" stroke-width=".8"/></svg></div><div class="a" style="left:215px;top:122.49px;width:346px;height:.5px;background:#ebebeb"></div><div class="cb on" style="left:377.3px;top:128.175px"><svg width="6" height="6" viewBox="0 0 6 6" style="display:block"><path d="M1.3 3.1L2.5 4.3L4.7 1.8" fill="none" stroke="#fff" stroke-width=".8"/></svg></div><div class="cb on" style="left:550.3px;top:128.175px"><svg width="6" height="6" viewBox="0 0 6 6" style="display:block"><path d="M1.3 3.1L2.5 4.3L4.7 1.8" fill="none" stroke="#fff" stroke-width=".8"/></svg></div><div class="a" style="left:215px;top:133.36px;width:346px;height:.5px;background:#ebebeb"></div><div class="cb on" style="left:377.3px;top:139.05px"><svg width="6" height="6" viewBox="0 0 6 6" style="display:block"><path d="M1.3 3.1L2.5 4.3L4.7 1.8" fill="none" stroke="#fff" stroke-width=".8"/></svg></div><div class="cb on" style="left:550.3px;top:139.05px"><svg width="6" height="6" viewBox="0 0 6 6" style="display:block"><path d="M1.3 3.1L2.5 4.3L4.7 1.8" fill="none" stroke="#fff" stroke-width=".8"/></svg></div><div class="a" style="left:215px;top:144.24px;width:346px;height:.5px;background:#ebebeb"></div><div class="cb off" style="left:377.3px;top:149.925px"></div><div class="cb off" style="left:550.3px;top:149.925px"></div><div class="a" style="left:215px;top:155.11px;width:346px;height:.5px;background:#ebebeb"></div><div class="cb on" style="left:377.3px;top:160.8px"><svg width="6" height="6" viewBox="0 0 6 6" style="display:block"><path d="M1.3 3.1L2.5 4.3L4.7 1.8" fill="none" stroke="#fff" stroke-width=".8"/></svg></div><div class="cb on" style="left:550.3px;top:160.8px"><svg width="6" height="6" viewBox="0 0 6 6" style="display:block"><path d="M1.3 3.1L2.5 4.3L4.7 1.8" fill="none" stroke="#fff" stroke-width=".8"/></svg></div><div class="a" style="left:215px;top:165.99px;width:346px;height:.5px;background:#ebebeb"></div><div class="cb on" style="left:377.3px;top:171.675px"><svg width="6" height="6" viewBox="0 0 6 6" style="display:block"><path d="M1.3 3.1L2.5 4.3L4.7 1.8" fill="none" stroke="#fff" stroke-width=".8"/></svg></div><div class="cb on" style="left:550.3px;top:171.675px"><svg width="6" height="6" viewBox="0 0 6 6" style="display:block"><path d="M1.3 3.1L2.5 4.3L4.7 1.8" fill="none" stroke="#fff" stroke-width=".8"/></svg></div><div class="a" style="left:215px;top:176.86px;width:346px;height:.5px;background:#ebebeb"></div><div class="cb on" style="left:377.3px;top:182.55px"><svg width="6" height="6" viewBox="0 0 6 6" style="display:block"><path d="M1.3 3.1L2.5 4.3L4.7 1.8" fill="none" stroke="#fff" stroke-width=".8"/></svg></div><div class="cb on" style="left:550.3px;top:182.55px"><svg width="6" height="6" viewBox="0 0 6 6" style="display:block"><path d="M1.3 3.1L2.5 4.3L4.7 1.8" fill="none" stroke="#fff" stroke-width=".8"/></svg></div><div class="a" style="left:215px;top:187.74px;width:346px;height:.5px;background:#ebebeb"></div><div class="cb off" style="left:377.3px;top:193.425px"></div><div class="cb off" style="left:550.3px;top:193.425px"></div><div class="a" style="left:215px;top:198.61px;width:346px;height:.5px;background:#ebebeb"></div><div class="cb off" style="left:377.3px;top:204.3px"></div><div class="cb off" style="left:550.3px;top:204.3px"></div><div class="a" style="left:215px;top:209.49px;width:346px;height:.5px;background:#ebebeb"></div><div class="cb off" style="left:377.3px;top:215.175px"></div><div class="cb off" style="left:550.3px;top:215.175px"></div><div class="a" style="left:215px;top:220.36px;width:346px;height:.5px;background:#ebebeb"></div><div class="a" style="left:243.75px;top:111.5px;width:.5px;height:106px;background:#ebebeb"></div><div class="a" style="left:279.75px;top:111.5px;width:.5px;height:106px;background:#ebebeb"></div><div class="a" style="left:308.75px;top:111.5px;width:.5px;height:106px;background:#ebebeb"></div><div class="a" style="left:337.75px;top:111.5px;width:.5px;height:106px;background:#ebebeb"></div><div class="a" style="left:366.25px;top:111.5px;width:.5px;height:106px;background:#ebebeb"></div><div class="a" style="left:387.85px;top:111.5px;width:.5px;height:106px;background:#ebebeb"></div><div class="a" style="left:417.25px;top:111.5px;width:.5px;height:106px;background:#ebebeb"></div><div class="a" style="left:453.25px;top:111.5px;width:.5px;height:106px;background:#ebebeb"></div><div class="a" style="left:482.25px;top:111.5px;width:.5px;height:106px;background:#ebebeb"></div><div class="a" style="left:510.75px;top:111.5px;width:.5px;height:106px;background:#ebebeb"></div><div class="a" style="left:539.25px;top:111.5px;width:.5px;height:106px;background:#ebebeb"></div><div class="a" style="left:560.85px;top:111.5px;width:.5px;height:106px;background:#ebebeb"></div></div>
<div class="a" style="left:563.6px;top:108px;width:2.9px;height:38px;background:#808080;border-radius:1px"></div>
<div class="a inp" style="left:247.4px;top:219.9px;width:48.4px;height:9px"><svg class="a" style="right:1.4px;top:2.6px" width="5.2" height="3.4" viewBox="0 0 5.2 3.4"><path d="M.5 .6L2.6 2.7L4.7 .6" fill="none" stroke="#1e96e6" stroke-width="1.3"/></svg></div>
<div class="a" style="left:214.2px;top:231.4px;width:355.3px;height:103.2px;background:#f0f0f0;border:.7px solid #c6c6c6"></div>
<div class="a" style="left:543.8px;top:338px;width:26.2px;height:9.6px;background:#fbfbfb;border:.5px solid #e4e4e4;border-radius:1.5px"><svg class="a" style="left:4.6px;top:1.7px" width="5.4" height="5.4" viewBox="0 0 5.4 5.4"><circle cx="2.7" cy="2.7" r="2.5" fill="#27b43c"/><path d="M1.5 2.8L2.4 3.7L4 1.9" fill="none" stroke="#fff" stroke-width=".8"/></svg></div>
<svg class="ov" width="810" height="440" viewBox="0 0 810 440" font-family='"Liberation Sans","Noto Sans CJK SC",sans-serif'><text x="222.20" y="68.62" font-size="4.5" fill="#222" stroke="#222" stroke-width="0.18">通讯设置</text><text x="548.00" y="68.80" font-size="5" fill="#333" stroke="#333" stroke-width="0.18" text-anchor="middle" font-weight="bold">?</text><text x="215.00" y="81.98" font-size="4.4" fill="#1a1a1a" stroke="#1a1a1a" stroke-width="0.18">设备类型:</text><text x="245.80" y="81.98" font-size="4.4" fill="#222" stroke="#222" stroke-width="0.18">电能设备</text><text x="319.20" y="81.98" font-size="4.4" fill="#1a1a1a" stroke="#1a1a1a" stroke-width="0.18">采样率:</text><text x="338.80" y="81.78" font-size="4.4" fill="#444" stroke="#444" stroke-width="0.06" font-family='"Liberation Mono","Noto Sans CJK SC",monospace'>51200 Hz</text><text x="402.50" y="81.98" font-size="4.4" fill="#1a1a1a" stroke="#1a1a1a" stroke-width="0.18">采样点数(每周波):</text><text x="446.20" y="81.58" font-size="4.4" fill="#555" stroke="#555" stroke-width="0.06" font-family='"Liberation Mono","Noto Sans CJK SC",monospace'>1024</text><text x="215.00" y="95.58" font-size="4.4" fill="#1a1a1a" stroke="#1a1a1a" stroke-width="0.18" font-family='"Liberation Mono","Noto Sans CJK SC",monospace'>IP地址/USB:</text><text x="245.60" y="95.51" font-size="4.2" fill="#444" stroke="#444" stroke-width="0.06" font-family='"Liberation Mono","Noto Sans CJK SC",monospace'>192.168.31.50</text><text x="322.00" y="95.32" font-size="4.5" fill="#222" stroke="#222" stroke-width="0.18" text-anchor="middle">联机</text><clipPath id="tc"><rect x="214.5" y="102" width="354" height="115.3"/></clipPath><g clip-path="url(#tc)"><text x="229.25" y="108.58" font-size="4.4" fill="#111" stroke="#111" stroke-width="0.1" text-anchor="middle">电压通道id</text><text x="262.00" y="108.58" font-size="4.4" fill="#111" stroke="#111" stroke-width="0.1" text-anchor="middle">通道名称</text><text x="294.50" y="108.58" font-size="4.4" fill="#111" stroke="#111" stroke-width="0.1" text-anchor="middle">量程</text><text x="323.50" y="108.58" font-size="4.4" fill="#111" stroke="#111" stroke-width="0.1" text-anchor="middle">探头设置</text><text x="352.25" y="108.58" font-size="4.4" fill="#111" stroke="#111" stroke-width="0.1" text-anchor="middle">一次变比</text><text x="377.30" y="108.58" font-size="4.4" fill="#111" stroke="#111" stroke-width="0.1" text-anchor="middle">是否显示</text><text x="402.80" y="108.58" font-size="4.4" fill="#111" stroke="#111" stroke-width="0.1" text-anchor="middle">电流通道id</text><text x="435.50" y="108.58" font-size="4.4" fill="#111" stroke="#111" stroke-width="0.1" text-anchor="middle">通道名称</text><text x="468.00" y="108.58" font-size="4.4" fill="#111" stroke="#111" stroke-width="0.1" text-anchor="middle">量程</text><text x="496.75" y="108.58" font-size="4.4" fill="#111" stroke="#111" stroke-width="0.1" text-anchor="middle">探头设置</text><text x="525.25" y="108.58" font-size="4.4" fill="#111" stroke="#111" stroke-width="0.1" text-anchor="middle">一次变比</text><text x="550.30" y="108.58" font-size="4.4" fill="#111" stroke="#111" stroke-width="0.1" text-anchor="middle">是否显示</text><text x="229.25" y="119.10" font-size="5" fill="#1c1c1c" stroke="#1c1c1c" stroke-width="0.09" text-anchor="middle">L0-Ua</text><text x="262.00" y="119.10" font-size="5" fill="#1c1c1c" stroke="#1c1c1c" stroke-width="0.09" text-anchor="middle">L0-Ua</text><text x="294.50" y="119.10" font-size="5" fill="#1c1c1c" stroke="#1c1c1c" stroke-width="0.09" text-anchor="middle">100V</text><text x="323.50" y="119.10" font-size="5" fill="#1c1c1c" stroke="#1c1c1c" stroke-width="0.09" text-anchor="middle">1:1</text><text x="352.25" y="119.10" font-size="5" fill="#1c1c1c" stroke="#1c1c1c" stroke-width="0.09" text-anchor="middle">1000</text><text x="402.80" y="119.10" font-size="5" fill="#1c1c1c" stroke="#1c1c1c" stroke-width="0.09" text-anchor="middle">L0-Ia</text><text x="435.50" y="119.10" font-size="5" fill="#1c1c1c" stroke="#1c1c1c" stroke-width="0.09" text-anchor="middle">L0-Ia</text><text x="468.00" y="119.10" font-size="5" fill="#1c1c1c" stroke="#1c1c1c" stroke-width="0.09" text-anchor="middle">10A</text><text x="496.75" y="119.10" font-size="5" fill="#1c1c1c" stroke="#1c1c1c" stroke-width="0.09" text-anchor="middle">1A:1V</text><text x="525.25" y="119.10" font-size="5" fill="#1c1c1c" stroke="#1c1c1c" stroke-width="0.09" text-anchor="middle">1000</text><text x="229.25" y="129.98" font-size="5" fill="#1c1c1c" stroke="#1c1c1c" stroke-width="0.09" text-anchor="middle">L0-Ub</text><text x="262.00" y="129.98" font-size="5" fill="#1c1c1c" stroke="#1c1c1c" stroke-width="0.09" text-anchor="middle">L0-Ub</text><text x="294.50" y="129.98" font-size="5" fill="#1c1c1c" stroke="#1c1c1c" stroke-width="0.09" text-anchor="middle">100V</text><text x="323.50" y="129.98" font-size="5" fill="#1c1c1c" stroke="#1c1c1c" stroke-width="0.09" text-anchor="middle">1:1</text><text x="352.25" y="129.98" font-size="5" fill="#1c1c1c" stroke="#1c1c1c" stroke-width="0.09" text-anchor="middle">1000</text><text x="402.80" y="129.98" font-size="5" fill="#1c1c1c" stroke="#1c1c1c" stroke-width="0.09" text-anchor="middle">L0-Ib</text><text x="435.50" y="129.98" font-size="5" fill="#1c1c1c" stroke="#1c1c1c" stroke-width="0.09" text-anchor="middle">L0-Ib</text><text x="468.00" y="129.98" font-size="5" fill="#1c1c1c" stroke="#1c1c1c" stroke-width="0.09" text-anchor="middle">10A</text><text x="496.75" y="129.98" font-size="5" fill="#1c1c1c" stroke="#1c1c1c" stroke-width="0.09" text-anchor="middle">1A:1V</text><text x="525.25" y="129.98" font-size="5" fill="#1c1c1c" stroke="#1c1c1c" stroke-width="0.09" text-anchor="middle">1000</text><text x="229.25" y="140.85" font-size="5" fill="#1c1c1c" stroke="#1c1c1c" stroke-width="0.09" text-anchor="middle">L0-Uc</text><text x="262.00" y="140.85" font-size="5" fill="#1c1c1c" stroke="#1c1c1c" stroke-width="0.09" text-anchor="middle">L0-Uc</text><text x="294.50" y="140.85" font-size="5" fill="#1c1c1c" stroke="#1c1c1c" stroke-width="0.09" text-anchor="middle">100V</text><text x="323.50" y="140.85" font-size="5" fill="#1c1c1c" stroke="#1c1c1c" stroke-width="0.09" text-anchor="middle">1:1</text><text x="352.25" y="140.85" font-size="5" fill="#1c1c1c" stroke="#1c1c1c" stroke-width="0.09" text-anchor="middle">1000</text><text x="402.80" y="140.85" font-size="5" fill="#1c1c1c" stroke="#1c1c1c" stroke-width="0.09" text-anchor="middle">L0-Ic</text><text x="435.50" y="140.85" font-size="5" fill="#1c1c1c" stroke="#1c1c1c" stroke-width="0.09" text-anchor="middle">L0-Ic</text><text x="468.00" y="140.85" font-size="5" fill="#1c1c1c" stroke="#1c1c1c" stroke-width="0.09" text-anchor="middle">10A</text><text x="496.75" y="140.85" font-size="5" fill="#1c1c1c" stroke="#1c1c1c" stroke-width="0.09" text-anchor="middle">1A:1V</text><text x="525.25" y="140.85" font-size="5" fill="#1c1c1c" stroke="#1c1c1c" stroke-width="0.09" text-anchor="middle">1000</text><text x="229.25" y="151.73" font-size="5" fill="#1c1c1c" stroke="#1c1c1c" stroke-width="0.09" text-anchor="middle">L0-Un</text><text x="262.00" y="151.73" font-size="5" fill="#1c1c1c" stroke="#1c1c1c" stroke-width="0.09" text-anchor="middle">L0-Un</text><text x="294.50" y="151.73" font-size="5" fill="#1c1c1c" stroke="#1c1c1c" stroke-width="0.09" text-anchor="middle">100V</text><text x="323.50" y="151.73" font-size="5" fill="#1c1c1c" stroke="#1c1c1c" stroke-width="0.09" text-anchor="middle">1:1</text><text x="352.25" y="151.73" font-size="5" fill="#1c1c1c" stroke="#1c1c1c" stroke-width="0.09" text-anchor="middle">1000</text><text x="402.80" y="151.73" font-size="5" fill="#1c1c1c" stroke="#1c1c1c" stroke-width="0.09" text-anchor="middle">L0-In</text><text x="435.50" y="151.73" font-size="5" fill="#1c1c1c" stroke="#1c1c1c" stroke-width="0.09" text-anchor="middle">L0-In</text><text x="468.00" y="151.73" font-size="5" fill="#1c1c1c" stroke="#1c1c1c" stroke-width="0.09" text-anchor="middle">10A</text><text x="496.75" y="151.73" font-size="5" fill="#1c1c1c" stroke="#1c1c1c" stroke-width="0.09" text-anchor="middle">1A:1V</text><text x="525.25" y="151.73" font-size="5" fill="#1c1c1c" stroke="#1c1c1c" stroke-width="0.09" text-anchor="middle">1000</text><text x="229.25" y="162.60" font-size="5" fill="#1c1c1c" stroke="#1c1c1c" stroke-width="0.09" text-anchor="middle">L1-Ua</text><text x="262.00" y="162.60" font-size="5" fill="#1c1c1c" stroke="#1c1c1c" stroke-width="0.09" text-anchor="middle">L1-Ua</text><text x="294.50" y="162.60" font-size="5" fill="#1c1c1c" stroke="#1c1c1c" stroke-width="0.09" text-anchor="middle">100V</text><text x="323.50" y="162.60" font-size="5" fill="#1c1c1c" stroke="#1c1c1c" stroke-width="0.09" text-anchor="middle">1:1</text><text x="352.25" y="162.60" font-size="5" fill="#1c1c1c" stroke="#1c1c1c" stroke-width="0.09" text-anchor="middle">1000</text><text x="402.80" y="162.60" font-size="5" fill="#1c1c1c" stroke="#1c1c1c" stroke-width="0.09" text-anchor="middle">L1-Ia</text><text x="435.50" y="162.60" font-size="5" fill="#1c1c1c" stroke="#1c1c1c" stroke-width="0.09" text-anchor="middle">L1-Ia</text><text x="468.00" y="162.60" font-size="5" fill="#1c1c1c" stroke="#1c1c1c" stroke-width="0.09" text-anchor="middle">10A</text><text x="496.75" y="162.60" font-size="5" fill="#1c1c1c" stroke="#1c1c1c" stroke-width="0.09" text-anchor="middle">1A:1V</text><text x="525.25" y="162.60" font-size="5" fill="#1c1c1c" stroke="#1c1c1c" stroke-width="0.09" text-anchor="middle">1000</text><text x="229.25" y="173.48" font-size="5" fill="#1c1c1c" stroke="#1c1c1c" stroke-width="0.09" text-anchor="middle">L1-Ub</text><text x="262.00" y="173.48" font-size="5" fill="#1c1c1c" stroke="#1c1c1c" stroke-width="0.09" text-anchor="middle">L1-Ub</text><text x="294.50" y="173.48" font-size="5" fill="#1c1c1c" stroke="#1c1c1c" stroke-width="0.09" text-anchor="middle">100V</text><text x="323.50" y="173.48" font-size="5" fill="#1c1c1c" stroke="#1c1c1c" stroke-width="0.09" text-anchor="middle">1:1</text><text x="352.25" y="173.48" font-size="5" fill="#1c1c1c" stroke="#1c1c1c" stroke-width="0.09" text-anchor="middle">1000</text><text x="402.80" y="173.48" font-size="5" fill="#1c1c1c" stroke="#1c1c1c" stroke-width="0.09" text-anchor="middle">L1-Ib</text><text x="435.50" y="173.48" font-size="5" fill="#1c1c1c" stroke="#1c1c1c" stroke-width="0.09" text-anchor="middle">L1-Ib</text><text x="468.00" y="173.48" font-size="5" fill="#1c1c1c" stroke="#1c1c1c" stroke-width="0.09" text-anchor="middle">10A</text><text x="496.75" y="173.48" font-size="5" fill="#1c1c1c" stroke="#1c1c1c" stroke-width="0.09" text-anchor="middle">1A:1V</text><text x="525.25" y="173.48" font-size="5" fill="#1c1c1c" stroke="#1c1c1c" stroke-width="0.09" text-anchor="middle">1000</text><text x="229.25" y="184.35" font-size="5" fill="#1c1c1c" stroke="#1c1c1c" stroke-width="0.09" text-anchor="middle">L1-Uc</text><text x="262.00" y="184.35" font-size="5" fill="#1c1c1c" stroke="#1c1c1c" stroke-width="0.09" text-anchor="middle">L1-Uc</text><text x="294.50" y="184.35" font-size="5" fill="#1c1c1c" stroke="#1c1c1c" stroke-width="0.09" text-anchor="middle">100V</text><text x="323.50" y="184.35" font-size="5" fill="#1c1c1c" stroke="#1c1c1c" stroke-width="0.09" text-anchor="middle">1:1</text><text x="352.25" y="184.35" font-size="5" fill="#1c1c1c" stroke="#1c1c1c" stroke-width="0.09" text-anchor="middle">1000</text><text x="402.80" y="184.35" font-size="5" fill="#1c1c1c" stroke="#1c1c1c" stroke-width="0.09" text-anchor="middle">L1-Ic</text><text x="435.50" y="184.35" font-size="5" fill="#1c1c1c" stroke="#1c1c1c" stroke-width="0.09" text-anchor="middle">L1-Ic</text><text x="468.00" y="184.35" font-size="5" fill="#1c1c1c" stroke="#1c1c1c" stroke-width="0.09" text-anchor="middle">10A</text><text x="496.75" y="184.35" font-size="5" fill="#1c1c1c" stroke="#1c1c1c" stroke-width="0.09" text-anchor="middle">1A:1V</text><text x="525.25" y="184.35" font-size="5" fill="#1c1c1c" stroke="#1c1c1c" stroke-width="0.09" text-anchor="middle">1000</text><text x="229.25" y="195.23" font-size="5" fill="#1c1c1c" stroke="#1c1c1c" stroke-width="0.09" text-anchor="middle">L1-Un</text><text x="262.00" y="195.23" font-size="5" fill="#1c1c1c" stroke="#1c1c1c" stroke-width="0.09" text-anchor="middle">L1-Un</text><text x="294.50" y="195.23" font-size="5" fill="#1c1c1c" stroke="#1c1c1c" stroke-width="0.09" text-anchor="middle">100V</text><text x="323.50" y="195.23" font-size="5" fill="#1c1c1c" stroke="#1c1c1c" stroke-width="0.09" text-anchor="middle">1:1</text><text x="352.25" y="195.23" font-size="5" fill="#1c1c1c" stroke="#1c1c1c" stroke-width="0.09" text-anchor="middle">1000</text><text x="402.80" y="195.23" font-size="5" fill="#1c1c1c" stroke="#1c1c1c" stroke-width="0.09" text-anchor="middle">L1-In</text><text x="435.50" y="195.23" font-size="5" fill="#1c1c1c" stroke="#1c1c1c" stroke-width="0.09" text-anchor="middle">L1-In</text><text x="468.00" y="195.23" font-size="5" fill="#1c1c1c" stroke="#1c1c1c" stroke-width="0.09" text-anchor="middle">10A</text><text x="496.75" y="195.23" font-size="5" fill="#1c1c1c" stroke="#1c1c1c" stroke-width="0.09" text-anchor="middle">1A:1V</text><text x="525.25" y="195.23" font-size="5" fill="#1c1c1c" stroke="#1c1c1c" stroke-width="0.09" text-anchor="middle">1000</text><text x="229.25" y="206.10" font-size="5" fill="#1c1c1c" stroke="#1c1c1c" stroke-width="0.09" text-anchor="middle">L2-Ua</text><text x="262.00" y="206.10" font-size="5" fill="#1c1c1c" stroke="#1c1c1c" stroke-width="0.09" text-anchor="middle">L2-Ua</text><text x="294.50" y="206.10" font-size="5" fill="#1c1c1c" stroke="#1c1c1c" stroke-width="0.09" text-anchor="middle">100V</text><text x="323.50" y="206.10" font-size="5" fill="#1c1c1c" stroke="#1c1c1c" stroke-width="0.09" text-anchor="middle">1:1</text><text x="352.25" y="206.10" font-size="5" fill="#1c1c1c" stroke="#1c1c1c" stroke-width="0.09" text-anchor="middle">1000</text><text x="402.80" y="206.10" font-size="5" fill="#1c1c1c" stroke="#1c1c1c" stroke-width="0.09" text-anchor="middle">L2-Ia</text><text x="435.50" y="206.10" font-size="5" fill="#1c1c1c" stroke="#1c1c1c" stroke-width="0.09" text-anchor="middle">L2-Ia</text><text x="468.00" y="206.10" font-size="5" fill="#1c1c1c" stroke="#1c1c1c" stroke-width="0.09" text-anchor="middle">10A</text><text x="496.75" y="206.10" font-size="5" fill="#1c1c1c" stroke="#1c1c1c" stroke-width="0.09" text-anchor="middle">1A:1V</text><text x="525.25" y="206.10" font-size="5" fill="#1c1c1c" stroke="#1c1c1c" stroke-width="0.09" text-anchor="middle">1000</text><text x="229.25" y="216.98" font-size="5" fill="#1c1c1c" stroke="#1c1c1c" stroke-width="0.09" text-anchor="middle">L2-Ub</text><text x="262.00" y="216.98" font-size="5" fill="#1c1c1c" stroke="#1c1c1c" stroke-width="0.09" text-anchor="middle">L2-Ub</text><text x="294.50" y="216.98" font-size="5" fill="#1c1c1c" stroke="#1c1c1c" stroke-width="0.09" text-anchor="middle">100V</text><text x="323.50" y="216.98" font-size="5" fill="#1c1c1c" stroke="#1c1c1c" stroke-width="0.09" text-anchor="middle">1:1</text><text x="352.25" y="216.98" font-size="5" fill="#1c1c1c" stroke="#1c1c1c" stroke-width="0.09" text-anchor="middle">1000</text><text x="402.80" y="216.98" font-size="5" fill="#1c1c1c" stroke="#1c1c1c" stroke-width="0.09" text-anchor="middle">L2-Ib</text><text x="435.50" y="216.98" font-size="5" fill="#1c1c1c" stroke="#1c1c1c" stroke-width="0.09" text-anchor="middle">L2-Ib</text><text x="468.00" y="216.98" font-size="5" fill="#1c1c1c" stroke="#1c1c1c" stroke-width="0.09" text-anchor="middle">10A</text><text x="496.75" y="216.98" font-size="5" fill="#1c1c1c" stroke="#1c1c1c" stroke-width="0.09" text-anchor="middle">1A:1V</text><text x="525.25" y="216.98" font-size="5" fill="#1c1c1c" stroke="#1c1c1c" stroke-width="0.09" text-anchor="middle">1000</text></g><text x="215.00" y="226.08" font-size="4.4" fill="#1a1a1a" stroke="#1a1a1a" stroke-width="0.18">功率通道配置:</text><text x="249.60" y="225.98" font-size="4.4" fill="#222" stroke="#222" stroke-width="0.18">无</text><text x="555.60" y="345.06" font-size="4.6" fill="#222" stroke="#222" stroke-width="0.18">确认</text></svg>
</body></html>
